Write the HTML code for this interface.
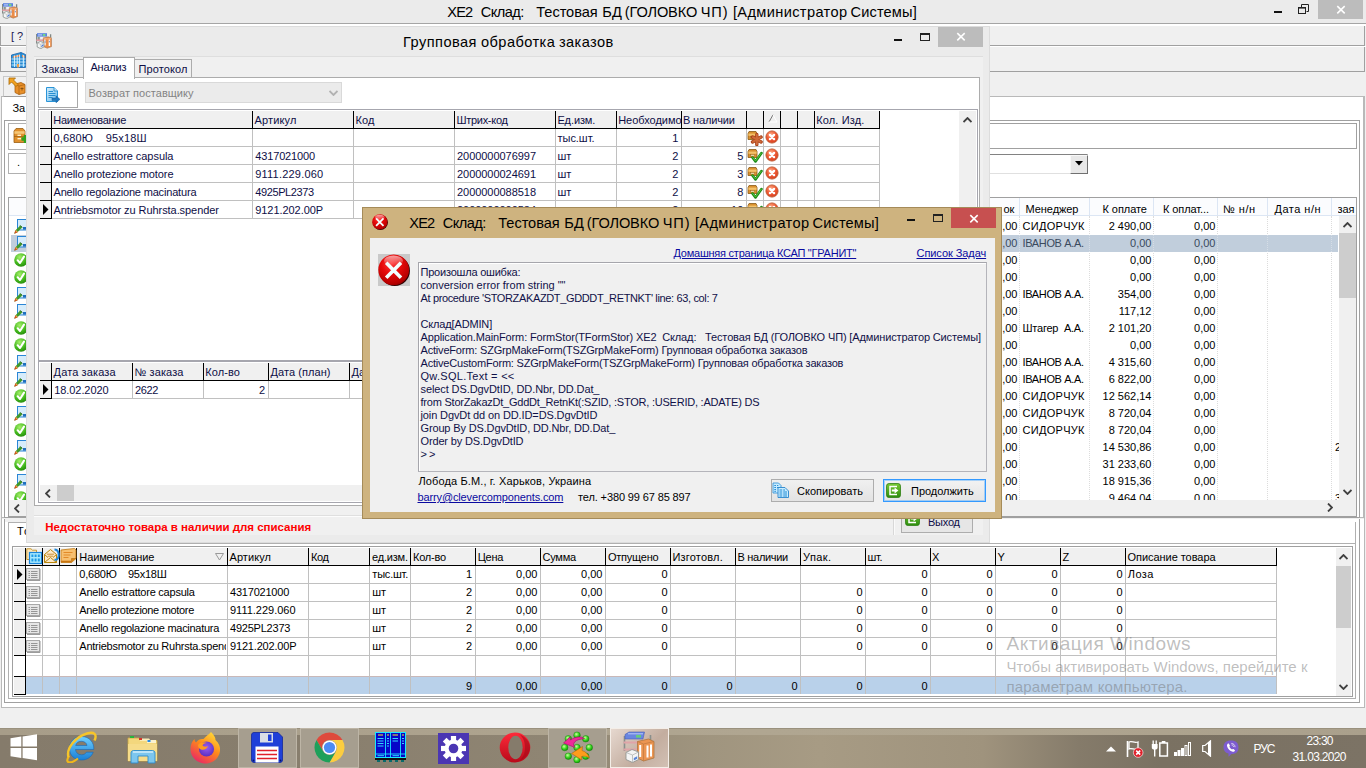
<!DOCTYPE html>
<html><head><meta charset="utf-8"><title>XE2</title>
<style>
html,body{margin:0;padding:0;}
body{width:1366px;height:768px;overflow:hidden;position:relative;background:#f0f0f0;font-family:"Liberation Sans",sans-serif;font-size:11px;}
div,span,svg{position:absolute;box-sizing:content-box;}
span{white-space:pre;}
</style></head><body>
<div style="left:0px;top:0px;width:1366px;height:23px;background:#ebebeb;"></div>
<div style="left:0px;top:23px;width:1366px;height:1px;background:#a5a5a5;"></div>
<span style="left:447.30px;top:5px;font-size:14.6px;line-height:14.6px;color:#000;letter-spacing:-0.897px;">XE2</span>
<span style="left:480.80px;top:5px;font-size:14.6px;line-height:14.6px;color:#000;letter-spacing:-0.539px;">Склад:</span>
<span style="left:536.30px;top:5px;font-size:14.6px;line-height:14.6px;color:#000;letter-spacing:-0.052px;">Тестовая</span>
<span style="left:602.20px;top:5px;font-size:14.6px;line-height:14.6px;color:#000;letter-spacing:0.331px;">БД</span>
<span style="left:624.70px;top:5px;font-size:14.6px;line-height:14.6px;color:#000;letter-spacing:-0.126px;">(ГОЛОВКО</span>
<span style="left:700.80px;top:5px;font-size:14.6px;line-height:14.6px;color:#000;letter-spacing:0.811px;">ЧП)</span>
<span style="left:732.90px;top:5px;font-size:14.6px;line-height:14.6px;color:#000;letter-spacing:0.372px;">[Администратор</span>
<span style="left:850.60px;top:5px;font-size:14.6px;line-height:14.6px;color:#000;letter-spacing:0.128px;">Системы]</span>
<div style="left:1318px;top:0px;width:45px;height:19px;background:#bcbcbc;"></div>
<svg style="left:1336px;top:5px" width="10" height="9" viewBox="0 0 10 9"><path d="M1.3 1.2 L8.7 8.3 M8.7 1.2 L1.3 8.3" stroke="#fff" stroke-width="1.6" fill="none"/></svg>
<div style="left:1274px;top:11px;width:8px;height:2px;background:#111;"></div>
<svg style="left:1298px;top:4px" width="12" height="11" viewBox="0 0 12 11"><path d="M3.5 3 V0.5 H10.5 V7.5 H8.5" stroke="#222" fill="none"/><rect x="0.5" y="3.5" width="7" height="6" stroke="#222" fill="none"/><path d="M0 3.8 H8" stroke="#222" stroke-width="1.6"/></svg>
<div style="left:0px;top:24px;width:1366px;height:2px;background:#fff;"></div>
<div style="left:0px;top:26px;width:1363px;height:19px;background:#f0f0f0;border-right:1px solid #a0a0a0;border-bottom:1px solid #a0a0a0;border-left:1px solid #a0a0a0;"></div>
<div style="left:0px;top:46px;width:1366px;height:1px;background:#fff;"></div>
<div style="left:0px;top:47px;width:1363px;height:24px;background:#f0f0f0;border-right:1px solid #a0a0a0;border-bottom:1px solid #a0a0a0;border-left:1px solid #a0a0a0;"></div>
<div style="left:1px;top:96px;width:1361px;height:420px;background:#fff;border:1px solid #b9b9b9;"></div>
<div style="left:4px;top:120px;width:1354px;height:396px;border:1px solid #a0a0a0;"></div>
<div style="left:600px;top:123px;width:755px;height:24px;background:#fff;border:1px solid #a0a0a0;"></div>
<div style="left:900px;top:154px;width:186px;height:18px;background:#fff;border:1px solid #828282;border-right-color:#e0e0e0;border-bottom-color:#e0e0e0;"></div>
<div style="left:1070px;top:155px;width:16px;height:17px;background:#e8e8e8;border:1px solid #f8f8f8;border-right-color:#707070;border-bottom-color:#707070;"></div>
<svg style="left:1075px;top:161px" width="8" height="5"><path d="M0 0 H8 L4 4.5Z" fill="#000"/></svg>
<div style="left:0px;top:728px;width:1366px;height:40px;background:#82786a;background:linear-gradient(90deg,#857b6b 0,#887e6d 22%,#8f8573 40%,#a0957f 52%,#a79b84 60%,#9f937d 72%,#857b6a 79%,#7a7162 85%,#7c7365 100%);"></div>
<div style="left:0px;top:728px;width:1366px;height:1px;background:#9a917e;"></div>
<div style="left:8px;top:197px;width:1347px;height:318px;background:#fff;border:1px solid #a0a0a0;"></div>
<div style="left:9px;top:198px;width:1347px;height:18px;background:#fbfcfe;"></div>
<div style="left:9px;top:215px;width:1347px;height:1px;background:#dce6f4;"></div>
<div style="left:1018.5px;top:198px;width:1px;height:18px;background:#dce6f4;"></div>
<div style="left:1018.5px;top:216px;width:0px;height:284px;border-left:1px dotted #dcdcdc;"></div>
<div style="left:1088.5px;top:198px;width:1px;height:18px;background:#dce6f4;"></div>
<div style="left:1088.5px;top:216px;width:0px;height:284px;border-left:1px dotted #dcdcdc;"></div>
<div style="left:1152.5px;top:198px;width:1px;height:18px;background:#dce6f4;"></div>
<div style="left:1152.5px;top:216px;width:0px;height:284px;border-left:1px dotted #dcdcdc;"></div>
<div style="left:1216.5px;top:198px;width:1px;height:18px;background:#dce6f4;"></div>
<div style="left:1216.5px;top:216px;width:0px;height:284px;border-left:1px dotted #dcdcdc;"></div>
<div style="left:1266.5px;top:198px;width:1px;height:18px;background:#dce6f4;"></div>
<div style="left:1266.5px;top:216px;width:0px;height:284px;border-left:1px dotted #dcdcdc;"></div>
<div style="left:1330.5px;top:198px;width:1px;height:18px;background:#dce6f4;"></div>
<div style="left:1330.5px;top:216px;width:0px;height:284px;border-left:1px dotted #dcdcdc;"></div>
<span style="left:1003.50px;top:204px;font-size:11px;line-height:11px;color:#000;">ок</span>
<span style="left:1025.50px;top:204px;font-size:11px;line-height:11px;color:#000;letter-spacing:-0.054px;">Менеджер</span>
<span style="left:1102.50px;top:204px;font-size:11px;line-height:11px;color:#000;letter-spacing:-0.054px;">К оплате</span>
<span style="left:1163.00px;top:204px;font-size:11px;line-height:11px;color:#000;letter-spacing:-0.092px;">К оплат...</span>
<span style="left:1223.00px;top:204px;font-size:11px;line-height:11px;color:#000;letter-spacing:0.484px;">№ н/н</span>
<span style="left:1274.50px;top:204px;font-size:11px;line-height:11px;color:#000;letter-spacing:0.482px;">Дата н/н</span>
<span style="left:1337.50px;top:204px;font-size:11px;line-height:11px;color:#000;width:18.5px;overflow:hidden;letter-spacing:-0.062px;">зая</span>
<div style="left:6px;top:216px;width:1350px;height:284px;overflow:hidden;">
<span style="left:990.08px;top:5px;font-size:11px;line-height:11px;color:#000;">0,00</span>
<span style="left:1016.50px;top:5px;font-size:11px;line-height:11px;color:#000;letter-spacing:0.297px;">СИДОРЧУК</span>
<span style="left:1102.67px;top:5px;font-size:11px;line-height:11px;color:#000;">2 490,00</span>
<span style="left:1188.08px;top:5px;font-size:11px;line-height:11px;color:#000;">0,00</span>
<div style="left:5px;top:18.5px;width:1327px;height:17px;background:#c1cedc;"></div>
<div style="left:1012.5px;top:18.5px;width:0px;height:17px;border-left:1px dotted #d5dde6;"></div>
<div style="left:1082.5px;top:18.5px;width:0px;height:17px;border-left:1px dotted #d5dde6;"></div>
<div style="left:1146.5px;top:18.5px;width:0px;height:17px;border-left:1px dotted #d5dde6;"></div>
<div style="left:1210.5px;top:18.5px;width:0px;height:17px;border-left:1px dotted #d5dde6;"></div>
<div style="left:1260.5px;top:18.5px;width:0px;height:17px;border-left:1px dotted #d5dde6;"></div>
<div style="left:1324.5px;top:18.5px;width:0px;height:17px;border-left:1px dotted #d5dde6;"></div>
<span style="left:990.08px;top:22px;font-size:11px;line-height:11px;color:#3a4a5e;">0,00</span>
<span style="left:1016.50px;top:22px;font-size:11px;line-height:11px;color:#3a4a5e;letter-spacing:-0.355px;">ІВАНОВ А.А.</span>
<span style="left:1124.08px;top:22px;font-size:11px;line-height:11px;color:#3a4a5e;">0,00</span>
<span style="left:1188.08px;top:22px;font-size:11px;line-height:11px;color:#3a4a5e;">0,00</span>
<span style="left:990.08px;top:39px;font-size:11px;line-height:11px;color:#000;">0,00</span>
<span style="left:1124.08px;top:39px;font-size:11px;line-height:11px;color:#000;">0,00</span>
<span style="left:1188.08px;top:39px;font-size:11px;line-height:11px;color:#000;">0,00</span>
<span style="left:990.08px;top:56px;font-size:11px;line-height:11px;color:#000;">0,00</span>
<span style="left:1124.08px;top:56px;font-size:11px;line-height:11px;color:#000;">0,00</span>
<span style="left:1188.08px;top:56px;font-size:11px;line-height:11px;color:#000;">0,00</span>
<span style="left:990.08px;top:73px;font-size:11px;line-height:11px;color:#000;">0,00</span>
<span style="left:1016.50px;top:73px;font-size:11px;line-height:11px;color:#000;letter-spacing:-0.355px;">ІВАНОВ А.А.</span>
<span style="left:1111.84px;top:73px;font-size:11px;line-height:11px;color:#000;">354,00</span>
<span style="left:1188.08px;top:73px;font-size:11px;line-height:11px;color:#000;">0,00</span>
<span style="left:990.08px;top:90px;font-size:11px;line-height:11px;color:#000;">0,00</span>
<span style="left:1112.67px;top:90px;font-size:11px;line-height:11px;color:#000;">117,12</span>
<span style="left:1188.08px;top:90px;font-size:11px;line-height:11px;color:#000;">0,00</span>
<span style="left:990.08px;top:107px;font-size:11px;line-height:11px;color:#000;">0,00</span>
<span style="left:1016.50px;top:107px;font-size:11px;line-height:11px;color:#000;letter-spacing:-0.230px;">Штагер  А.А.</span>
<span style="left:1102.67px;top:107px;font-size:11px;line-height:11px;color:#000;">2 101,20</span>
<span style="left:1188.08px;top:107px;font-size:11px;line-height:11px;color:#000;">0,00</span>
<span style="left:990.08px;top:124px;font-size:11px;line-height:11px;color:#000;">0,00</span>
<span style="left:1124.08px;top:124px;font-size:11px;line-height:11px;color:#000;">0,00</span>
<span style="left:1188.08px;top:124px;font-size:11px;line-height:11px;color:#000;">0,00</span>
<span style="left:990.08px;top:141px;font-size:11px;line-height:11px;color:#000;">0,00</span>
<span style="left:1016.50px;top:141px;font-size:11px;line-height:11px;color:#000;letter-spacing:-0.355px;">ІВАНОВ А.А.</span>
<span style="left:1102.67px;top:141px;font-size:11px;line-height:11px;color:#000;">4 315,60</span>
<span style="left:1188.08px;top:141px;font-size:11px;line-height:11px;color:#000;">0,00</span>
<span style="left:990.08px;top:158px;font-size:11px;line-height:11px;color:#000;">0,00</span>
<span style="left:1016.50px;top:158px;font-size:11px;line-height:11px;color:#000;letter-spacing:-0.355px;">ІВАНОВ А.А.</span>
<span style="left:1102.67px;top:158px;font-size:11px;line-height:11px;color:#000;">6 822,00</span>
<span style="left:1188.08px;top:158px;font-size:11px;line-height:11px;color:#000;">0,00</span>
<span style="left:990.08px;top:175px;font-size:11px;line-height:11px;color:#000;">0,00</span>
<span style="left:1016.50px;top:175px;font-size:11px;line-height:11px;color:#000;letter-spacing:0.297px;">СИДОРЧУК</span>
<span style="left:1096.56px;top:175px;font-size:11px;line-height:11px;color:#000;">12 562,14</span>
<span style="left:1188.08px;top:175px;font-size:11px;line-height:11px;color:#000;">0,00</span>
<span style="left:990.08px;top:192px;font-size:11px;line-height:11px;color:#000;">0,00</span>
<span style="left:1016.50px;top:192px;font-size:11px;line-height:11px;color:#000;letter-spacing:0.297px;">СИДОРЧУК</span>
<span style="left:1102.67px;top:192px;font-size:11px;line-height:11px;color:#000;">8 720,04</span>
<span style="left:1188.08px;top:192px;font-size:11px;line-height:11px;color:#000;">0,00</span>
<span style="left:990.08px;top:209px;font-size:11px;line-height:11px;color:#000;">0,00</span>
<span style="left:1016.50px;top:209px;font-size:11px;line-height:11px;color:#000;letter-spacing:0.297px;">СИДОРЧУК</span>
<span style="left:1102.67px;top:209px;font-size:11px;line-height:11px;color:#000;">8 720,04</span>
<span style="left:1188.08px;top:209px;font-size:11px;line-height:11px;color:#000;">0,00</span>
<span style="left:990.08px;top:226px;font-size:11px;line-height:11px;color:#000;">0,00</span>
<span style="left:1096.56px;top:226px;font-size:11px;line-height:11px;color:#000;">14 530,86</span>
<span style="left:1188.08px;top:226px;font-size:11px;line-height:11px;color:#000;">0,00</span>
<span style="left:990.08px;top:243px;font-size:11px;line-height:11px;color:#000;">0,00</span>
<span style="left:1096.56px;top:243px;font-size:11px;line-height:11px;color:#000;">31 233,60</span>
<span style="left:1188.08px;top:243px;font-size:11px;line-height:11px;color:#000;">0,00</span>
<span style="left:990.08px;top:260px;font-size:11px;line-height:11px;color:#000;">0,00</span>
<span style="left:1096.56px;top:260px;font-size:11px;line-height:11px;color:#000;">18 915,36</span>
<span style="left:1188.08px;top:260px;font-size:11px;line-height:11px;color:#000;">0,00</span>
<span style="left:990.08px;top:277px;font-size:11px;line-height:11px;color:#000;">0,00</span>
<span style="left:1102.67px;top:277px;font-size:11px;line-height:11px;color:#000;">9 464,04</span>
<span style="left:1188.08px;top:277px;font-size:11px;line-height:11px;color:#000;">0,00</span>
<svg style="left:8px;top:2.5px" width="16" height="16" viewBox="0 0 16 16">
<rect x="3.5" y="0.5" width="11" height="10.5" fill="#d6ecfb" stroke="#2a86d6" stroke-width="1"/>
<rect x="9" y="8" width="5" height="2.6" fill="#1f6fc0"/>
<path d="M0.3 14.7 L1.3 11.6 L6.2 6.4 L8.2 8.4 L3.2 13.6Z" fill="#3f9a2a"/>
<path d="M0.3 14.7 L1.3 11.6 L3.2 13.6Z" fill="#d8481a"/><path d="M1.6 11.3 L3.5 13.3" stroke="#f0a050" stroke-width="1.2"/>
<path d="M6.2 6.4 L8.2 8.4" stroke="#2a6a1a" stroke-width="1"/></svg>
<svg style="left:8px;top:19.5px" width="16" height="16" viewBox="0 0 16 16">
<rect x="3.5" y="0.5" width="11" height="10.5" fill="#d6ecfb" stroke="#2a86d6" stroke-width="1"/>
<rect x="9" y="8" width="5" height="2.6" fill="#1f6fc0"/>
<path d="M0.3 14.7 L1.3 11.6 L6.2 6.4 L8.2 8.4 L3.2 13.6Z" fill="#3f9a2a"/>
<path d="M0.3 14.7 L1.3 11.6 L3.2 13.6Z" fill="#d8481a"/><path d="M1.6 11.3 L3.5 13.3" stroke="#f0a050" stroke-width="1.2"/>
<path d="M6.2 6.4 L8.2 8.4" stroke="#2a6a1a" stroke-width="1"/></svg>
<svg style="left:8px;top:37.0px" width="14" height="14" viewBox="0 0 14 14">
<defs><radialGradient id="gk37.0" cx="0.4" cy="0.3" r="0.8"><stop offset="0" stop-color="#a4f06a"/><stop offset="0.6" stop-color="#3fb51a"/><stop offset="1" stop-color="#1f7d0a"/></radialGradient></defs>
<circle cx="7" cy="7" r="6.8" fill="url(#gk37.0)"/>
<path d="M3.6 7.2 L6 10 L10 3.6" stroke="#fff" stroke-width="2" fill="none" stroke-linejoin="round" stroke-linecap="round"/></svg>
<svg style="left:8px;top:54.0px" width="14" height="14" viewBox="0 0 14 14">
<defs><radialGradient id="gk54.0" cx="0.4" cy="0.3" r="0.8"><stop offset="0" stop-color="#a4f06a"/><stop offset="0.6" stop-color="#3fb51a"/><stop offset="1" stop-color="#1f7d0a"/></radialGradient></defs>
<circle cx="7" cy="7" r="6.8" fill="url(#gk54.0)"/>
<path d="M3.6 7.2 L6 10 L10 3.6" stroke="#fff" stroke-width="2" fill="none" stroke-linejoin="round" stroke-linecap="round"/></svg>
<svg style="left:8px;top:70.5px" width="16" height="16" viewBox="0 0 16 16">
<rect x="3.5" y="0.5" width="11" height="10.5" fill="#d6ecfb" stroke="#2a86d6" stroke-width="1"/>
<rect x="9" y="8" width="5" height="2.6" fill="#1f6fc0"/>
<path d="M0.3 14.7 L1.3 11.6 L6.2 6.4 L8.2 8.4 L3.2 13.6Z" fill="#3f9a2a"/>
<path d="M0.3 14.7 L1.3 11.6 L3.2 13.6Z" fill="#d8481a"/><path d="M1.6 11.3 L3.5 13.3" stroke="#f0a050" stroke-width="1.2"/>
<path d="M6.2 6.4 L8.2 8.4" stroke="#2a6a1a" stroke-width="1"/></svg>
<svg style="left:8px;top:87.5px" width="16" height="16" viewBox="0 0 16 16">
<rect x="3.5" y="0.5" width="11" height="10.5" fill="#d6ecfb" stroke="#2a86d6" stroke-width="1"/>
<rect x="9" y="8" width="5" height="2.6" fill="#1f6fc0"/>
<path d="M0.3 14.7 L1.3 11.6 L6.2 6.4 L8.2 8.4 L3.2 13.6Z" fill="#3f9a2a"/>
<path d="M0.3 14.7 L1.3 11.6 L3.2 13.6Z" fill="#d8481a"/><path d="M1.6 11.3 L3.5 13.3" stroke="#f0a050" stroke-width="1.2"/>
<path d="M6.2 6.4 L8.2 8.4" stroke="#2a6a1a" stroke-width="1"/></svg>
<svg style="left:8px;top:105.0px" width="14" height="14" viewBox="0 0 14 14">
<defs><radialGradient id="gk105.0" cx="0.4" cy="0.3" r="0.8"><stop offset="0" stop-color="#a4f06a"/><stop offset="0.6" stop-color="#3fb51a"/><stop offset="1" stop-color="#1f7d0a"/></radialGradient></defs>
<circle cx="7" cy="7" r="6.8" fill="url(#gk105.0)"/>
<path d="M3.6 7.2 L6 10 L10 3.6" stroke="#fff" stroke-width="2" fill="none" stroke-linejoin="round" stroke-linecap="round"/></svg>
<svg style="left:8px;top:122.0px" width="14" height="14" viewBox="0 0 14 14">
<defs><radialGradient id="gk122.0" cx="0.4" cy="0.3" r="0.8"><stop offset="0" stop-color="#a4f06a"/><stop offset="0.6" stop-color="#3fb51a"/><stop offset="1" stop-color="#1f7d0a"/></radialGradient></defs>
<circle cx="7" cy="7" r="6.8" fill="url(#gk122.0)"/>
<path d="M3.6 7.2 L6 10 L10 3.6" stroke="#fff" stroke-width="2" fill="none" stroke-linejoin="round" stroke-linecap="round"/></svg>
<svg style="left:8px;top:138.5px" width="16" height="16" viewBox="0 0 16 16">
<rect x="3.5" y="0.5" width="11" height="10.5" fill="#d6ecfb" stroke="#2a86d6" stroke-width="1"/>
<rect x="9" y="8" width="5" height="2.6" fill="#1f6fc0"/>
<path d="M0.3 14.7 L1.3 11.6 L6.2 6.4 L8.2 8.4 L3.2 13.6Z" fill="#3f9a2a"/>
<path d="M0.3 14.7 L1.3 11.6 L3.2 13.6Z" fill="#d8481a"/><path d="M1.6 11.3 L3.5 13.3" stroke="#f0a050" stroke-width="1.2"/>
<path d="M6.2 6.4 L8.2 8.4" stroke="#2a6a1a" stroke-width="1"/></svg>
<svg style="left:8px;top:155.5px" width="16" height="16" viewBox="0 0 16 16">
<rect x="3.5" y="0.5" width="11" height="10.5" fill="#d6ecfb" stroke="#2a86d6" stroke-width="1"/>
<rect x="9" y="8" width="5" height="2.6" fill="#1f6fc0"/>
<path d="M0.3 14.7 L1.3 11.6 L6.2 6.4 L8.2 8.4 L3.2 13.6Z" fill="#3f9a2a"/>
<path d="M0.3 14.7 L1.3 11.6 L3.2 13.6Z" fill="#d8481a"/><path d="M1.6 11.3 L3.5 13.3" stroke="#f0a050" stroke-width="1.2"/>
<path d="M6.2 6.4 L8.2 8.4" stroke="#2a6a1a" stroke-width="1"/></svg>
<svg style="left:8px;top:173.0px" width="14" height="14" viewBox="0 0 14 14">
<defs><radialGradient id="gk173.0" cx="0.4" cy="0.3" r="0.8"><stop offset="0" stop-color="#a4f06a"/><stop offset="0.6" stop-color="#3fb51a"/><stop offset="1" stop-color="#1f7d0a"/></radialGradient></defs>
<circle cx="7" cy="7" r="6.8" fill="url(#gk173.0)"/>
<path d="M3.6 7.2 L6 10 L10 3.6" stroke="#fff" stroke-width="2" fill="none" stroke-linejoin="round" stroke-linecap="round"/></svg>
<svg style="left:8px;top:189.5px" width="16" height="16" viewBox="0 0 16 16">
<rect x="3.5" y="0.5" width="11" height="10.5" fill="#d6ecfb" stroke="#2a86d6" stroke-width="1"/>
<rect x="9" y="8" width="5" height="2.6" fill="#1f6fc0"/>
<path d="M0.3 14.7 L1.3 11.6 L6.2 6.4 L8.2 8.4 L3.2 13.6Z" fill="#3f9a2a"/>
<path d="M0.3 14.7 L1.3 11.6 L3.2 13.6Z" fill="#d8481a"/><path d="M1.6 11.3 L3.5 13.3" stroke="#f0a050" stroke-width="1.2"/>
<path d="M6.2 6.4 L8.2 8.4" stroke="#2a6a1a" stroke-width="1"/></svg>
<svg style="left:8px;top:207.0px" width="14" height="14" viewBox="0 0 14 14">
<defs><radialGradient id="gk207.0" cx="0.4" cy="0.3" r="0.8"><stop offset="0" stop-color="#a4f06a"/><stop offset="0.6" stop-color="#3fb51a"/><stop offset="1" stop-color="#1f7d0a"/></radialGradient></defs>
<circle cx="7" cy="7" r="6.8" fill="url(#gk207.0)"/>
<path d="M3.6 7.2 L6 10 L10 3.6" stroke="#fff" stroke-width="2" fill="none" stroke-linejoin="round" stroke-linecap="round"/></svg>
<svg style="left:8px;top:223.5px" width="16" height="16" viewBox="0 0 16 16">
<rect x="3.5" y="0.5" width="11" height="10.5" fill="#d6ecfb" stroke="#2a86d6" stroke-width="1"/>
<rect x="9" y="8" width="5" height="2.6" fill="#1f6fc0"/>
<path d="M0.3 14.7 L1.3 11.6 L6.2 6.4 L8.2 8.4 L3.2 13.6Z" fill="#3f9a2a"/>
<path d="M0.3 14.7 L1.3 11.6 L3.2 13.6Z" fill="#d8481a"/><path d="M1.6 11.3 L3.5 13.3" stroke="#f0a050" stroke-width="1.2"/>
<path d="M6.2 6.4 L8.2 8.4" stroke="#2a6a1a" stroke-width="1"/></svg>
<svg style="left:8px;top:241.0px" width="14" height="14" viewBox="0 0 14 14">
<defs><radialGradient id="gk241.0" cx="0.4" cy="0.3" r="0.8"><stop offset="0" stop-color="#a4f06a"/><stop offset="0.6" stop-color="#3fb51a"/><stop offset="1" stop-color="#1f7d0a"/></radialGradient></defs>
<circle cx="7" cy="7" r="6.8" fill="url(#gk241.0)"/>
<path d="M3.6 7.2 L6 10 L10 3.6" stroke="#fff" stroke-width="2" fill="none" stroke-linejoin="round" stroke-linecap="round"/></svg>
<svg style="left:8px;top:257.5px" width="16" height="16" viewBox="0 0 16 16">
<rect x="3.5" y="0.5" width="11" height="10.5" fill="#d6ecfb" stroke="#2a86d6" stroke-width="1"/>
<rect x="9" y="8" width="5" height="2.6" fill="#1f6fc0"/>
<path d="M0.3 14.7 L1.3 11.6 L6.2 6.4 L8.2 8.4 L3.2 13.6Z" fill="#3f9a2a"/>
<path d="M0.3 14.7 L1.3 11.6 L3.2 13.6Z" fill="#d8481a"/><path d="M1.6 11.3 L3.5 13.3" stroke="#f0a050" stroke-width="1.2"/>
<path d="M6.2 6.4 L8.2 8.4" stroke="#2a6a1a" stroke-width="1"/></svg>
<svg style="left:8px;top:275.0px" width="14" height="14" viewBox="0 0 14 14">
<defs><radialGradient id="gk275.0" cx="0.4" cy="0.3" r="0.8"><stop offset="0" stop-color="#a4f06a"/><stop offset="0.6" stop-color="#3fb51a"/><stop offset="1" stop-color="#1f7d0a"/></radialGradient></defs>
<circle cx="7" cy="7" r="6.8" fill="url(#gk275.0)"/>
<path d="M3.6 7.2 L6 10 L10 3.6" stroke="#fff" stroke-width="2" fill="none" stroke-linejoin="round" stroke-linecap="round"/></svg>
<span style="left:1329.00px;top:226px;font-size:11px;line-height:11px;color:#000;">2</span>
<span style="left:1329.00px;top:277px;font-size:11px;line-height:11px;color:#000;">3</span>
</div>
<div style="left:1339px;top:216px;width:17px;height:284px;background:#f0f0f0;"></div>
<div style="left:1339px;top:233px;width:17px;height:65px;background:#cdcdcd;"></div>
<svg style="left:1343px;top:222px" width="9" height="6"><path d="M0.5 5 L4.5 1 L8.5 5" stroke="#404040" stroke-width="1.8" fill="none"/></svg>
<svg style="left:1343px;top:489px" width="9" height="6"><path d="M0.5 1 L4.5 5 L8.5 1" stroke="#404040" stroke-width="1.8" fill="none"/></svg>
<div style="left:9px;top:500px;width:1347px;height:16px;background:#f0f0f0;"></div>
<svg style="left:1327px;top:503px" width="6" height="9"><path d="M1 0.5 L5 4.5 L1 8.5" stroke="#404040" stroke-width="1.8" fill="none"/></svg>
<svg style="left:14px;top:503.5px" width="6" height="9"><path d="M5 0.5 L1 4.5 L5 8.5" stroke="#404040" stroke-width="1.8" fill="none"/></svg>
<div style="left:1339px;top:500px;width:17px;height:16px;background:#f0f0f0;"></div>
<div style="left:4px;top:120px;width:1px;height:398px;background:#a0a0a0;"></div>
<span style="left:11.00px;top:31px;font-size:11px;line-height:11px;color:#1a1a50;">[ ?</span>
<svg style="left:11px;top:52px" width="16" height="16" viewBox="0 0 16 16">
<path d="M0.5 3 L10 0.5 L14.5 2.5 V15.5 H0.5Z" fill="#2f9be0" stroke="#1a5fa8" stroke-width="0.8"/>
<path d="M10 0.5 V15.5" stroke="#1a5fa8" stroke-width="0.6"/>
<path d="M2 4.2 L9 2.5 V4.5 L2 6Z" fill="#f08a4a"/><path d="M11 2.8 L13.8 4 V6 L11 5Z" fill="#f08a4a"/>
<path d="M3.5 3.5 V15 M6.2 3 V15 M8.6 2.6 V15 M12.4 3 V15" stroke="#dff2ff" stroke-width="0.9"/>
<path d="M0.5 7 H14.5 M0.5 10 H14.5 M0.5 13 H14.5" stroke="#dff2ff" stroke-width="0.8"/>
<rect x="6" y="12" width="2" height="3.5" fill="#f0a04a"/></svg>
<div style="left:3px;top:76px;width:24px;height:19px;background:#f0f0f0;border:1px solid #c8c8c8;border-bottom-color:#a0a0a0;"></div>
<svg style="left:8px;top:77px" width="18" height="18" viewBox="0 0 18 18">
<path d="M7 7 L13 5.5 L17 7.5 V16 L11 17.5 L7 15.5Z" fill="#e8902a" stroke="#a8600f" stroke-width="0.8"/>
<path d="M7 7 L11 9 L17 7.5 M11 9 V17.5" stroke="#a8600f" stroke-width="0.7" fill="none"/>
<path d="M12.5 11.5 H15.5 M14 10.5 V13.5" stroke="#7a4a10" stroke-width="0.8"/>
<path d="M1 1 H7.5 L5.5 3 L10 7.5 L8 9.5 L3.5 5 L1 7.5Z" fill="#f0a020" stroke="#a86a08" stroke-width="0.8"/></svg>
<span style="left:12.50px;top:103px;font-size:11px;line-height:11px;color:#000;letter-spacing:-0.266px;">За</span>
<div style="left:8px;top:123px;width:24px;height:25px;background:#fff;border:1px solid #b0b0b0;"></div>
<svg style="left:13px;top:127px" width="16" height="18" viewBox="0 0 16 18">
<path d="M1 4 L3 1.5 H10 L12 4 V15.5 H1Z" fill="#e0902c" stroke="#9a5e12" stroke-width="0.8"/>
<rect x="1.4" y="4.2" width="10.2" height="2.6" fill="#f5c878"/><path d="M1 9.5 H12" stroke="#9a5e12" stroke-width="0.7"/>
<rect x="4.5" y="7.6" width="3.5" height="1.4" fill="#fff3d0"/><rect x="4.5" y="11" width="3.5" height="1.4" fill="#fff3d0"/>
<path d="M12.5 8 V16 M8.5 12 H16.5" stroke="#2fa31e" stroke-width="3.4"/></svg>
<div style="left:8px;top:153px;width:24px;height:19px;background:#fff;border:1px solid #b0b0b0;"></div>
<span style="left:17.00px;top:157px;font-size:11px;line-height:11px;color:#000;">.</span>
<div style="left:1px;top:519px;width:1363px;height:188px;background:#fff;"></div>
<div style="left:1px;top:96px;width:1px;height:612px;background:#b9b9b9;"></div>
<div style="left:1364px;top:96px;width:1px;height:612px;background:#b9b9b9;"></div>
<div style="left:1px;top:707px;width:1364px;height:1px;background:#b9b9b9;"></div>
<div style="left:4px;top:519px;width:1px;height:184px;background:#a0a0a0;"></div>
<div style="left:1359px;top:519px;width:1px;height:184px;background:#a0a0a0;"></div>
<div style="left:4px;top:702px;width:1356px;height:1px;background:#a0a0a0;"></div>
<div style="left:5px;top:519px;width:21px;height:3px;background:#f0f0f0;"></div>
<div style="left:8px;top:522px;width:1346px;height:176px;border:1px solid #b0b0b0;border-top:none;"></div>
<div style="left:8px;top:522px;width:18px;height:1px;background:#b0b0b0;"></div>
<span style="left:17.00px;top:526px;font-size:11px;line-height:11px;color:#000;letter-spacing:1.016px;">То</span>
<div style="left:60px;top:543px;width:1296px;height:1px;background:#b0b0b0;"></div>
<div style="left:12px;top:546px;width:1339px;height:149px;border:1px solid #a0a0a0;"></div>
<div style="left:14px;top:548px;width:1263px;height:17px;background:#f0f0f0;"></div>
<div style="left:14px;top:565px;width:1263px;height:1px;background:#000;"></div>
<div style="left:25px;top:548px;width:1px;height:17px;background:#000;"></div>
<div style="left:42px;top:548px;width:1px;height:17px;background:#000;"></div>
<div style="left:59px;top:548px;width:1px;height:17px;background:#000;"></div>
<div style="left:76px;top:548px;width:1px;height:17px;background:#000;"></div>
<div style="left:227px;top:548px;width:1px;height:17px;background:#000;"></div>
<div style="left:308px;top:548px;width:1px;height:17px;background:#000;"></div>
<div style="left:369px;top:548px;width:1px;height:17px;background:#000;"></div>
<div style="left:410px;top:548px;width:1px;height:17px;background:#000;"></div>
<div style="left:475px;top:548px;width:1px;height:17px;background:#000;"></div>
<div style="left:540px;top:548px;width:1px;height:17px;background:#000;"></div>
<div style="left:605px;top:548px;width:1px;height:17px;background:#000;"></div>
<div style="left:670px;top:548px;width:1px;height:17px;background:#000;"></div>
<div style="left:735px;top:548px;width:1px;height:17px;background:#000;"></div>
<div style="left:800px;top:548px;width:1px;height:17px;background:#000;"></div>
<div style="left:865px;top:548px;width:1px;height:17px;background:#000;"></div>
<div style="left:930px;top:548px;width:1px;height:17px;background:#000;"></div>
<div style="left:995px;top:548px;width:1px;height:17px;background:#000;"></div>
<div style="left:1060px;top:548px;width:1px;height:17px;background:#000;"></div>
<div style="left:1125px;top:548px;width:1px;height:17px;background:#000;"></div>
<div style="left:1276px;top:548px;width:1px;height:17px;background:#000;"></div>
<div style="left:25px;top:548px;width:1px;height:147px;background:#000;"></div>
<div style="left:26px;top:583px;width:1251px;height:1px;background:#c0c0c0;"></div>
<div style="left:14px;top:566px;width:11px;height:17px;background:#f0f0f0;"></div>
<div style="left:14px;top:583px;width:12px;height:1px;background:#000;"></div>
<div style="left:26px;top:601px;width:1251px;height:1px;background:#c0c0c0;"></div>
<div style="left:14px;top:584px;width:11px;height:17px;background:#f0f0f0;"></div>
<div style="left:14px;top:601px;width:12px;height:1px;background:#000;"></div>
<div style="left:26px;top:619px;width:1251px;height:1px;background:#c0c0c0;"></div>
<div style="left:14px;top:602px;width:11px;height:17px;background:#f0f0f0;"></div>
<div style="left:14px;top:619px;width:12px;height:1px;background:#000;"></div>
<div style="left:26px;top:637px;width:1251px;height:1px;background:#c0c0c0;"></div>
<div style="left:14px;top:620px;width:11px;height:17px;background:#f0f0f0;"></div>
<div style="left:14px;top:637px;width:12px;height:1px;background:#000;"></div>
<div style="left:26px;top:655px;width:1251px;height:1px;background:#c0c0c0;"></div>
<div style="left:14px;top:638px;width:11px;height:17px;background:#f0f0f0;"></div>
<div style="left:14px;top:655px;width:12px;height:1px;background:#000;"></div>
<div style="left:14px;top:676px;width:12px;height:1px;background:#000;"></div>
<div style="left:26px;top:676px;width:1251px;height:1px;background:#c9b8b8;"></div>
<div style="left:26px;top:677px;width:1251px;height:17px;background:#b9d1ea;"></div>
<div style="left:14px;top:677px;width:11px;height:17px;background:#f0f0f0;"></div>
<div style="left:14px;top:694px;width:12px;height:1px;background:#000;"></div>
<div style="left:42px;top:566px;width:1px;height:128px;background:#c0c0c0;"></div>
<div style="left:59px;top:566px;width:1px;height:128px;background:#c0c0c0;"></div>
<div style="left:76px;top:566px;width:1px;height:128px;background:#c0c0c0;"></div>
<div style="left:227px;top:566px;width:1px;height:128px;background:#c0c0c0;"></div>
<div style="left:308px;top:566px;width:1px;height:128px;background:#c0c0c0;"></div>
<div style="left:369px;top:566px;width:1px;height:128px;background:#c0c0c0;"></div>
<div style="left:410px;top:566px;width:1px;height:128px;background:#c0c0c0;"></div>
<div style="left:475px;top:566px;width:1px;height:128px;background:#c0c0c0;"></div>
<div style="left:540px;top:566px;width:1px;height:128px;background:#c0c0c0;"></div>
<div style="left:605px;top:566px;width:1px;height:128px;background:#c0c0c0;"></div>
<div style="left:670px;top:566px;width:1px;height:128px;background:#c0c0c0;"></div>
<div style="left:735px;top:566px;width:1px;height:128px;background:#c0c0c0;"></div>
<div style="left:800px;top:566px;width:1px;height:128px;background:#c0c0c0;"></div>
<div style="left:865px;top:566px;width:1px;height:128px;background:#c0c0c0;"></div>
<div style="left:930px;top:566px;width:1px;height:128px;background:#c0c0c0;"></div>
<div style="left:995px;top:566px;width:1px;height:128px;background:#c0c0c0;"></div>
<div style="left:1060px;top:566px;width:1px;height:128px;background:#c0c0c0;"></div>
<div style="left:1125px;top:566px;width:1px;height:128px;background:#c0c0c0;"></div>
<div style="left:1276px;top:566px;width:1px;height:128px;background:#c0c0c0;"></div>
<svg style="left:17px;top:569px" width="6" height="11"><path d="M0 0 L5.5 5.5 L0 11Z" fill="#000"/></svg>
<span style="left:79.30px;top:552px;font-size:11px;line-height:11px;color:#000;letter-spacing:-0.115px;">Наименование</span>
<span style="left:229.50px;top:552px;font-size:11px;line-height:11px;color:#000;letter-spacing:0.081px;">Артикул</span>
<span style="left:311.00px;top:552px;font-size:11px;line-height:11px;color:#000;letter-spacing:-0.352px;">Код</span>
<span style="left:372.00px;top:552px;font-size:11px;line-height:11px;color:#000;letter-spacing:-0.195px;">ед.изм.</span>
<span style="left:413.00px;top:552px;font-size:11px;line-height:11px;color:#000;letter-spacing:-0.241px;">Кол-во</span>
<span style="left:477.80px;top:552px;font-size:11px;line-height:11px;color:#000;letter-spacing:-0.318px;">Цена</span>
<span style="left:542.60px;top:552px;font-size:11px;line-height:11px;color:#000;letter-spacing:-0.270px;">Сумма</span>
<span style="left:608.00px;top:552px;font-size:11px;line-height:11px;color:#000;letter-spacing:-0.242px;">Отпущено</span>
<span style="left:672.50px;top:552px;font-size:11px;line-height:11px;color:#000;letter-spacing:0.187px;">Изготовл.</span>
<span style="left:737.60px;top:552px;font-size:11px;line-height:11px;color:#000;letter-spacing:-0.321px;">В наличии</span>
<span style="left:803.00px;top:552px;font-size:11px;line-height:11px;color:#000;letter-spacing:0.391px;">Упак.</span>
<span style="left:867.60px;top:552px;font-size:11px;line-height:11px;color:#000;letter-spacing:-0.352px;">шт.</span>
<span style="left:932.00px;top:552px;font-size:11px;line-height:11px;color:#000;">X</span>
<span style="left:997.50px;top:552px;font-size:11px;line-height:11px;color:#000;">Y</span>
<span style="left:1062.50px;top:552px;font-size:11px;line-height:11px;color:#000;">Z</span>
<span style="left:1127.60px;top:552px;font-size:11px;line-height:11px;color:#000;letter-spacing:-0.056px;">Описание товара</span>
<svg style="left:215px;top:553px" width="10" height="8"><path d="M0.5 0.5 H8.5 L4.5 7Z" fill="none" stroke="#9a9a9a" stroke-width="1"/></svg>
<svg style="left:26px;top:567.5px" width="15" height="13" viewBox="0 0 15 13"><rect x="0.5" y="0.5" width="13" height="11" fill="#e6e6e6" stroke="#a8a8a8"/><path d="M14 1 V12.5 H1" stroke="#9c9c9c" fill="none"/><path d="M2.5 3.5 H4 M5 3.5 H11.5 M2.5 5.5 H4 M5 5.5 H11.5 M2.5 7.5 H4 M5 7.5 H11.5 M2.5 9.5 H4 M5 9.5 H11.5" stroke="#8c8c8c" stroke-width="0.9"/></svg>
<span style="left:79.30px;top:569px;font-size:11px;line-height:11px;color:#000;letter-spacing:-0.228px;">0,680Ю    95х18Ш</span>
<span style="left:372.30px;top:569px;font-size:11px;line-height:11px;color:#000;letter-spacing:-0.201px;">тыс.шт.</span>
<span style="left:465.88px;top:569px;font-size:11px;line-height:11px;color:#000;">1</span>
<span style="left:516.08px;top:569px;font-size:11px;line-height:11px;color:#000;">0,00</span>
<span style="left:581.08px;top:569px;font-size:11px;line-height:11px;color:#000;">0,00</span>
<span style="left:661.38px;top:569px;font-size:11px;line-height:11px;color:#000;">0</span>
<span style="left:921.38px;top:569px;font-size:11px;line-height:11px;color:#000;">0</span>
<span style="left:986.38px;top:569px;font-size:11px;line-height:11px;color:#000;">0</span>
<span style="left:1051.38px;top:569px;font-size:11px;line-height:11px;color:#000;">0</span>
<span style="left:1116.38px;top:569px;font-size:11px;line-height:11px;color:#000;">0</span>
<svg style="left:26px;top:585.5px" width="15" height="13" viewBox="0 0 15 13"><rect x="0.5" y="0.5" width="13" height="11" fill="#e6e6e6" stroke="#a8a8a8"/><path d="M14 1 V12.5 H1" stroke="#9c9c9c" fill="none"/><path d="M2.5 3.5 H4 M5 3.5 H11.5 M2.5 5.5 H4 M5 5.5 H11.5 M2.5 7.5 H4 M5 7.5 H11.5 M2.5 9.5 H4 M5 9.5 H11.5" stroke="#8c8c8c" stroke-width="0.9"/></svg>
<span style="left:79.30px;top:587px;font-size:11px;line-height:11px;color:#000;letter-spacing:-0.228px;">Anello estrattore capsula</span>
<span style="left:230.00px;top:587px;font-size:11px;line-height:11px;color:#000;letter-spacing:-0.210px;">4317021000</span>
<span style="left:372.30px;top:587px;font-size:11px;line-height:11px;color:#000;">шт</span>
<span style="left:465.88px;top:587px;font-size:11px;line-height:11px;color:#000;">2</span>
<span style="left:516.08px;top:587px;font-size:11px;line-height:11px;color:#000;">0,00</span>
<span style="left:581.08px;top:587px;font-size:11px;line-height:11px;color:#000;">0,00</span>
<span style="left:661.38px;top:587px;font-size:11px;line-height:11px;color:#000;">0</span>
<span style="left:856.38px;top:587px;font-size:11px;line-height:11px;color:#000;">0</span>
<span style="left:921.38px;top:587px;font-size:11px;line-height:11px;color:#000;">0</span>
<span style="left:986.38px;top:587px;font-size:11px;line-height:11px;color:#000;">0</span>
<span style="left:1051.38px;top:587px;font-size:11px;line-height:11px;color:#000;">0</span>
<span style="left:1116.38px;top:587px;font-size:11px;line-height:11px;color:#000;">0</span>
<svg style="left:26px;top:603.5px" width="15" height="13" viewBox="0 0 15 13"><rect x="0.5" y="0.5" width="13" height="11" fill="#e6e6e6" stroke="#a8a8a8"/><path d="M14 1 V12.5 H1" stroke="#9c9c9c" fill="none"/><path d="M2.5 3.5 H4 M5 3.5 H11.5 M2.5 5.5 H4 M5 5.5 H11.5 M2.5 7.5 H4 M5 7.5 H11.5 M2.5 9.5 H4 M5 9.5 H11.5" stroke="#8c8c8c" stroke-width="0.9"/></svg>
<span style="left:79.30px;top:605px;font-size:11px;line-height:11px;color:#000;letter-spacing:-0.317px;">Anello protezione motore</span>
<span style="left:230.00px;top:605px;font-size:11px;line-height:11px;color:#000;letter-spacing:-0.005px;">9111.229.060</span>
<span style="left:372.30px;top:605px;font-size:11px;line-height:11px;color:#000;">шт</span>
<span style="left:465.88px;top:605px;font-size:11px;line-height:11px;color:#000;">2</span>
<span style="left:516.08px;top:605px;font-size:11px;line-height:11px;color:#000;">0,00</span>
<span style="left:581.08px;top:605px;font-size:11px;line-height:11px;color:#000;">0,00</span>
<span style="left:661.38px;top:605px;font-size:11px;line-height:11px;color:#000;">0</span>
<span style="left:856.38px;top:605px;font-size:11px;line-height:11px;color:#000;">0</span>
<span style="left:921.38px;top:605px;font-size:11px;line-height:11px;color:#000;">0</span>
<span style="left:986.38px;top:605px;font-size:11px;line-height:11px;color:#000;">0</span>
<span style="left:1051.38px;top:605px;font-size:11px;line-height:11px;color:#000;">0</span>
<span style="left:1116.38px;top:605px;font-size:11px;line-height:11px;color:#000;">0</span>
<svg style="left:26px;top:621.5px" width="15" height="13" viewBox="0 0 15 13"><rect x="0.5" y="0.5" width="13" height="11" fill="#e6e6e6" stroke="#a8a8a8"/><path d="M14 1 V12.5 H1" stroke="#9c9c9c" fill="none"/><path d="M2.5 3.5 H4 M5 3.5 H11.5 M2.5 5.5 H4 M5 5.5 H11.5 M2.5 7.5 H4 M5 7.5 H11.5 M2.5 9.5 H4 M5 9.5 H11.5" stroke="#8c8c8c" stroke-width="0.9"/></svg>
<span style="left:79.30px;top:623px;font-size:11px;line-height:11px;color:#000;letter-spacing:-0.285px;">Anello regolazione macinatura</span>
<span style="left:230.00px;top:623px;font-size:11px;line-height:11px;color:#000;letter-spacing:-0.223px;">4925PL2373</span>
<span style="left:372.30px;top:623px;font-size:11px;line-height:11px;color:#000;">шт</span>
<span style="left:465.88px;top:623px;font-size:11px;line-height:11px;color:#000;">2</span>
<span style="left:516.08px;top:623px;font-size:11px;line-height:11px;color:#000;">0,00</span>
<span style="left:581.08px;top:623px;font-size:11px;line-height:11px;color:#000;">0,00</span>
<span style="left:661.38px;top:623px;font-size:11px;line-height:11px;color:#000;">0</span>
<span style="left:856.38px;top:623px;font-size:11px;line-height:11px;color:#000;">0</span>
<span style="left:921.38px;top:623px;font-size:11px;line-height:11px;color:#000;">0</span>
<span style="left:986.38px;top:623px;font-size:11px;line-height:11px;color:#000;">0</span>
<span style="left:1051.38px;top:623px;font-size:11px;line-height:11px;color:#000;">0</span>
<span style="left:1116.38px;top:623px;font-size:11px;line-height:11px;color:#000;">0</span>
<svg style="left:26px;top:639.5px" width="15" height="13" viewBox="0 0 15 13"><rect x="0.5" y="0.5" width="13" height="11" fill="#e6e6e6" stroke="#a8a8a8"/><path d="M14 1 V12.5 H1" stroke="#9c9c9c" fill="none"/><path d="M2.5 3.5 H4 M5 3.5 H11.5 M2.5 5.5 H4 M5 5.5 H11.5 M2.5 7.5 H4 M5 7.5 H11.5 M2.5 9.5 H4 M5 9.5 H11.5" stroke="#8c8c8c" stroke-width="0.9"/></svg>
<span style="left:79.30px;top:641px;font-size:11px;line-height:11px;color:#000;width:147px;overflow:hidden;letter-spacing:-0.243px;">Antriebsmotor zu Ruhrsta.spender</span>
<span style="left:230.00px;top:641px;font-size:11px;line-height:11px;color:#000;letter-spacing:-0.174px;">9121.202.00P</span>
<span style="left:372.30px;top:641px;font-size:11px;line-height:11px;color:#000;">шт</span>
<span style="left:465.88px;top:641px;font-size:11px;line-height:11px;color:#000;">2</span>
<span style="left:516.08px;top:641px;font-size:11px;line-height:11px;color:#000;">0,00</span>
<span style="left:581.08px;top:641px;font-size:11px;line-height:11px;color:#000;">0,00</span>
<span style="left:661.38px;top:641px;font-size:11px;line-height:11px;color:#000;">0</span>
<span style="left:856.38px;top:641px;font-size:11px;line-height:11px;color:#000;">0</span>
<span style="left:921.38px;top:641px;font-size:11px;line-height:11px;color:#000;">0</span>
<span style="left:986.38px;top:641px;font-size:11px;line-height:11px;color:#000;">0</span>
<span style="left:1051.38px;top:641px;font-size:11px;line-height:11px;color:#000;">0</span>
<span style="left:1116.38px;top:641px;font-size:11px;line-height:11px;color:#000;">0</span>
<span style="left:1127.80px;top:569px;font-size:11px;line-height:11px;color:#000;letter-spacing:0.408px;">Лоза</span>
<span style="left:465.88px;top:681px;font-size:11px;line-height:11px;color:#000;">9</span>
<span style="left:516.08px;top:681px;font-size:11px;line-height:11px;color:#000;">0,00</span>
<span style="left:581.08px;top:681px;font-size:11px;line-height:11px;color:#000;">0,00</span>
<span style="left:661.38px;top:681px;font-size:11px;line-height:11px;color:#000;">0</span>
<span style="left:726.38px;top:681px;font-size:11px;line-height:11px;color:#000;">0</span>
<span style="left:791.38px;top:681px;font-size:11px;line-height:11px;color:#000;">0</span>
<span style="left:856.38px;top:681px;font-size:11px;line-height:11px;color:#000;">0</span>
<span style="left:921.38px;top:681px;font-size:11px;line-height:11px;color:#000;">0</span>
<svg style="left:26px;top:547px" width="17" height="18" viewBox="0 0 17 18">
<path d="M0.8 1.8 H5 L6.5 3.2 H10.5 V12.5 H0.8Z" fill="#fbe6bd" stroke="#c29226" stroke-width="0.9"/>
<rect x="3.5" y="5.5" width="12" height="11" fill="#a9eaff" stroke="#1a86dc" stroke-width="1.2"/>
<path d="M5.4 7.4 H7.4 V10 H5.4Z M8.6 7.4 H10.6 V10 H8.6Z M11.8 7.4 H13.8 V10 H11.8Z M5.4 11.6 H7.4 V14.4 H5.4Z M8.6 11.6 H10.6 V14.4 H8.6Z M11.8 11.6 H13.8 V14.4 H11.8Z" fill="#1f9be6"/></svg>
<svg style="left:43px;top:547px" width="17" height="18" viewBox="0 0 17 18">
<path d="M1.5 7.5 L7.5 2.5 L13.5 7.5 V15.5 H1.5Z" fill="#fde8c8" stroke="#b8860b" stroke-width="1"/>
<path d="M1.5 15.5 L7.5 10.5 L13.5 15.5 M1.5 7.5 L5 10.5 M13.5 7.5 L10 10.5" stroke="#b8860b" stroke-width="1" fill="none"/>
<path d="M4 7.2 H11 M5 9.2 H10" stroke="#c8923a" stroke-width="1"/>
<path d="M11.5 2.5 C15.5 2.5 16 7 15.5 9.5 C15 12.5 13 13 11.5 12.5" stroke="#1f86d8" stroke-width="2" fill="none"/></svg>
<svg style="left:60px;top:547px" width="17" height="18" viewBox="0 0 17 18">
<path d="M1 3 L14.5 1.5 L16 3 V11.5 L11.5 15.5 H1Z" fill="#f7c070" stroke="#c07a14" stroke-width="0.8"/>
<path d="M16 11.5 H11.5 V15.5" fill="#d6861a" stroke="#b06a10" stroke-width="0.6"/>
<path d="M1 14.5 H11" stroke="#c87410" stroke-width="1.6"/>
<path d="M3.5 5.5 H12.5 M3.5 8 H10.5 M3.5 10.5 H8.5" stroke="#e28a28" stroke-width="1.1"/></svg>
<div style="left:1336px;top:548px;width:15px;height:148px;background:#f0f0f0;"></div>
<div style="left:1336px;top:566px;width:15px;height:62px;background:#cdcdcd;"></div>
<svg style="left:1339px;top:554px" width="9" height="6"><path d="M0.5 5 L4.5 1 L8.5 5" stroke="#404040" stroke-width="1.8" fill="none"/></svg>
<svg style="left:1339px;top:684px" width="9" height="6"><path d="M0.5 1 L4.5 5 L8.5 1" stroke="#404040" stroke-width="1.8" fill="none"/></svg>
<svg style="left:2px;top:3px" width="16" height="16" viewBox="0 0 16 16">
<path d="M0.7 1 V10.5 M14.6 1.2 V5" stroke="#7f8783" stroke-width="1.3"/>
<rect x="1.3" y="3.6" width="6" height="5.6" fill="#dfe2e0"/>
<rect x="1.6" y="4" width="2.2" height="3" fill="#8d9692"/><rect x="4.6" y="4.2" width="2.6" height="1.6" fill="#f6f6f6"/>
<path d="M0.3 7.2 H8" stroke="#e29aa2" stroke-width="1.5"/>
<rect x="1" y="0.2" width="10" height="3.4" fill="#5a82e2"/><rect x="6.8" y="1" width="2.6" height="1.9" fill="#74d884"/><path d="M2 1.9 H6" stroke="#b9caf6" stroke-width="1.2"/>
<path d="M7.3 4.8 L12.2 3.8 L15.6 5 V13.6 L11.2 15.2 L7.3 13.6Z" fill="#ea8c48" stroke="#a77a5a" stroke-width="0.6"/>
<path d="M7.3 4.8 L11.2 6 L15.6 5" stroke="#f6c09a" stroke-width="0.7" fill="none"/>
<path d="M8.9 6.6 V12.6 M13.4 6.6 V13" stroke="#fff" stroke-width="1.5"/><path d="M9 7.5 V10 M13.4 7.8 V9.4" stroke="#6f86b8" stroke-width="0.9"/>
<path d="M1.2 10 L4.4 8.5 L8 9.8 V13.8 L4.8 15.7 L1.2 14Z" fill="#f4f5f5" stroke="#868d8a" stroke-width="0.8"/>
<path d="M1.2 10 L4.8 11.4 L8 9.8 M4.8 11.4 V15.7" stroke="#b4b9b7" stroke-width="0.6" fill="none"/>
<path d="M5.4 13.6 L7.4 11.6" stroke="#4f7ad4" stroke-width="1.3"/>
</svg>
<div style="left:26px;top:26px;width:962px;height:515px;background:#ebebeb;border:1px solid #dcdcdc;">
</div>
<svg style="left:36px;top:33px" width="16" height="16" viewBox="0 0 16 16">
<path d="M0.7 1 V10.5 M14.6 1.2 V5" stroke="#7f8783" stroke-width="1.3"/>
<rect x="1.3" y="3.6" width="6" height="5.6" fill="#dfe2e0"/>
<rect x="1.6" y="4" width="2.2" height="3" fill="#8d9692"/><rect x="4.6" y="4.2" width="2.6" height="1.6" fill="#f6f6f6"/>
<path d="M0.3 7.2 H8" stroke="#e29aa2" stroke-width="1.5"/>
<rect x="1" y="0.2" width="10" height="3.4" fill="#5a82e2"/><rect x="6.8" y="1" width="2.6" height="1.9" fill="#74d884"/><path d="M2 1.9 H6" stroke="#b9caf6" stroke-width="1.2"/>
<path d="M7.3 4.8 L12.2 3.8 L15.6 5 V13.6 L11.2 15.2 L7.3 13.6Z" fill="#ea8c48" stroke="#a77a5a" stroke-width="0.6"/>
<path d="M7.3 4.8 L11.2 6 L15.6 5" stroke="#f6c09a" stroke-width="0.7" fill="none"/>
<path d="M8.9 6.6 V12.6 M13.4 6.6 V13" stroke="#fff" stroke-width="1.5"/><path d="M9 7.5 V10 M13.4 7.8 V9.4" stroke="#6f86b8" stroke-width="0.9"/>
<path d="M1.2 10 L4.4 8.5 L8 9.8 V13.8 L4.8 15.7 L1.2 14Z" fill="#f4f5f5" stroke="#868d8a" stroke-width="0.8"/>
<path d="M1.2 10 L4.8 11.4 L8 9.8 M4.8 11.4 V15.7" stroke="#b4b9b7" stroke-width="0.6" fill="none"/>
<path d="M5.4 13.6 L7.4 11.6" stroke="#4f7ad4" stroke-width="1.3"/>
</svg>
<span style="left:403.10px;top:35px;font-size:14.6px;line-height:14.6px;color:#000;letter-spacing:0.441px;">Групповая</span>
<span style="left:481.00px;top:35px;font-size:14.6px;line-height:14.6px;color:#000;letter-spacing:0.428px;">обработка</span>
<span style="left:559.00px;top:35px;font-size:14.6px;line-height:14.6px;color:#000;letter-spacing:0.387px;">заказов</span>
<div style="left:938px;top:27px;width:45px;height:20px;background:#bcbcbc;"></div>
<svg style="left:956px;top:32px" width="10" height="9" viewBox="0 0 10 9"><path d="M1.3 1.2 L8.7 8.3 M8.7 1.2 L1.3 8.3" stroke="#fff" stroke-width="1.6" fill="none"/></svg>
<div style="left:894px;top:39px;width:8px;height:2px;background:#111;"></div>
<svg style="left:920px;top:33px" width="11" height="9"><rect x="0.5" y="1.5" width="9" height="6" stroke="#222" fill="none"/><path d="M0 1 H10" stroke="#222" stroke-width="2"/></svg>
<div style="left:34px;top:57px;width:949px;height:478px;background:#f0f0f0;"></div>
<div style="left:34px;top:56px;width:949px;height:1px;background:#dedede;"></div>
<div style="left:34px;top:77px;width:944px;height:427px;background:#fff;border:1px solid #acacac;"></div>
<div style="left:36px;top:59px;width:47px;height:17px;background:#f0f0f0;border:1px solid #acacac;border-bottom:none;"></div>
<span style="left:41.50px;top:64px;font-size:11px;line-height:11px;color:#0e0e46;letter-spacing:0.047px;">Заказы</span>
<div style="left:134px;top:59px;width:56px;height:17px;background:#f0f0f0;border:1px solid #acacac;border-bottom:none;"></div>
<span style="left:138.50px;top:64px;font-size:11px;line-height:11px;color:#0e0e46;letter-spacing:0.118px;">Протокол</span>
<div style="left:83px;top:57px;width:50px;height:21px;background:#fff;border:1px solid #acacac;border-bottom:none;"></div>
<span style="left:90.50px;top:62px;font-size:11px;line-height:11px;color:#0e0e46;letter-spacing:-0.228px;">Анализ</span>
<div style="left:38px;top:81px;width:38px;height:25px;background:#fff;border:1px solid #a8a8a8;"></div>
<svg style="left:45px;top:87px" width="16" height="16" viewBox="0 0 16 16">
<defs><linearGradient id="dcg" x1="0" y1="0" x2="1" y2="1"><stop offset="0" stop-color="#d4eefc"/><stop offset="1" stop-color="#6cbcec"/></linearGradient></defs><path d="M1.5 0.5 H9 L12.5 4 V14.5 H1.5Z" fill="url(#dcg)" stroke="#2a94d8" stroke-width="1"/>
<path d="M9 0.5 V4 H12.5" fill="#bfe3f7" stroke="#1f86c8" stroke-width="0.8"/>
<path d="M3.5 4.5 H8 M3.5 6.5 H10.5 M3.5 8.5 H10.5 M3.5 10.5 H7.5" stroke="#2a8fd0" stroke-width="1"/>
<path d="M7 11 H11 V8.8 L15 12.3 L11 15.8 V13.6 H7Z" fill="#1f78c0" stroke="#155e9a" stroke-width="0.5"/>
</svg>
<div style="left:85px;top:82px;width:255px;height:19px;background:#ebebeb;border:1px solid #d9d9d9;"></div>
<span style="left:88.50px;top:88px;font-size:11px;line-height:11px;color:#838383;letter-spacing:0.036px;">Возврат поставщику</span>
<svg style="left:329px;top:90px" width="9" height="6"><path d="M0.5 1 L4.5 5 L8.5 1" stroke="#b2b2b2" stroke-width="1.8" fill="none"/></svg>
<div style="left:38px;top:109px;width:938px;height:250px;border:1px solid #a6a6ae;"></div>
<div style="left:40px;top:111px;width:839px;height:17px;background:#f0f0f0;"></div>
<div style="left:40px;top:128px;width:840px;height:1px;background:#000;"></div>
<div style="left:51px;top:111px;width:1px;height:17px;background:#000;"></div>
<div style="left:252px;top:111px;width:1px;height:17px;background:#000;"></div>
<div style="left:353px;top:111px;width:1px;height:17px;background:#000;"></div>
<div style="left:454px;top:111px;width:1px;height:17px;background:#000;"></div>
<div style="left:555px;top:111px;width:1px;height:17px;background:#000;"></div>
<div style="left:616px;top:111px;width:1px;height:17px;background:#000;"></div>
<div style="left:681px;top:111px;width:1px;height:17px;background:#000;"></div>
<div style="left:746px;top:111px;width:1px;height:17px;background:#000;"></div>
<div style="left:763px;top:111px;width:1px;height:17px;background:#000;"></div>
<div style="left:780px;top:111px;width:1px;height:17px;background:#000;"></div>
<div style="left:797px;top:111px;width:1px;height:17px;background:#000;"></div>
<div style="left:814px;top:111px;width:1px;height:17px;background:#000;"></div>
<div style="left:879px;top:111px;width:1px;height:17px;background:#000;"></div>
<div style="left:51px;top:146px;width:829px;height:1px;background:#c0c0c0;"></div>
<div style="left:40px;top:129px;width:11px;height:17px;background:#f0f0f0;"></div>
<div style="left:40px;top:146px;width:11px;height:1px;background:#000;"></div>
<div style="left:51px;top:164px;width:829px;height:1px;background:#c0c0c0;"></div>
<div style="left:40px;top:147px;width:11px;height:17px;background:#f0f0f0;"></div>
<div style="left:40px;top:164px;width:11px;height:1px;background:#000;"></div>
<div style="left:51px;top:182px;width:829px;height:1px;background:#c0c0c0;"></div>
<div style="left:40px;top:165px;width:11px;height:17px;background:#f0f0f0;"></div>
<div style="left:40px;top:182px;width:11px;height:1px;background:#000;"></div>
<div style="left:51px;top:200px;width:829px;height:1px;background:#c0c0c0;"></div>
<div style="left:40px;top:183px;width:11px;height:17px;background:#f0f0f0;"></div>
<div style="left:40px;top:200px;width:11px;height:1px;background:#000;"></div>
<div style="left:51px;top:218px;width:829px;height:1px;background:#c0c0c0;"></div>
<div style="left:40px;top:201px;width:11px;height:17px;background:#f0f0f0;"></div>
<div style="left:40px;top:218px;width:11px;height:1px;background:#000;"></div>
<div style="left:51px;top:111px;width:1px;height:108px;background:#000;"></div>
<div style="left:252px;top:129px;width:1px;height:90px;background:#c0c0c0;"></div>
<div style="left:353px;top:129px;width:1px;height:90px;background:#c0c0c0;"></div>
<div style="left:454px;top:129px;width:1px;height:90px;background:#c0c0c0;"></div>
<div style="left:555px;top:129px;width:1px;height:90px;background:#c0c0c0;"></div>
<div style="left:616px;top:129px;width:1px;height:90px;background:#c0c0c0;"></div>
<div style="left:681px;top:129px;width:1px;height:90px;background:#c0c0c0;"></div>
<div style="left:746px;top:129px;width:1px;height:90px;background:#c0c0c0;"></div>
<div style="left:763px;top:129px;width:1px;height:90px;background:#c0c0c0;"></div>
<div style="left:780px;top:129px;width:1px;height:90px;background:#c0c0c0;"></div>
<div style="left:797px;top:129px;width:1px;height:90px;background:#c0c0c0;"></div>
<div style="left:814px;top:129px;width:1px;height:90px;background:#c0c0c0;"></div>
<div style="left:879px;top:129px;width:1px;height:90px;background:#c0c0c0;"></div>
<span style="left:53.30px;top:115px;font-size:11px;line-height:11px;color:#0e0e46;letter-spacing:-0.297px;">Наименование</span>
<span style="left:254.40px;top:115px;font-size:11px;line-height:11px;color:#0e0e46;letter-spacing:0.164px;">Артикул</span>
<span style="left:355.40px;top:115px;font-size:11px;line-height:11px;color:#0e0e46;letter-spacing:0.148px;">Код</span>
<span style="left:456.40px;top:115px;font-size:11px;line-height:11px;color:#0e0e46;letter-spacing:-0.285px;">Штрих-код</span>
<span style="left:557.40px;top:115px;font-size:11px;line-height:11px;color:#0e0e46;letter-spacing:-0.104px;">Ед.изм.</span>
<span style="left:618.20px;top:115px;font-size:11px;line-height:11px;color:#0e0e46;letter-spacing:-0.014px;">Необходимо</span>
<span style="left:683.00px;top:115px;font-size:11px;line-height:11px;color:#0e0e46;letter-spacing:-0.146px;">В наличии</span>
<span style="left:816.30px;top:115px;font-size:11px;line-height:11px;color:#0e0e46;letter-spacing:0.125px;">Кол. Изд.</span>
<svg style="left:768px;top:114px" width="10" height="9"><path d="M1 8 L5 0.8" stroke="#777" stroke-width="1" fill="none"/><path d="M5 0.8 L9 8 H1" stroke="#fff" stroke-width="1" fill="none"/></svg>
<span style="left:53.50px;top:133px;font-size:11px;line-height:11px;color:#0e0e46;letter-spacing:0.139px;">0,680Ю    95х18Ш</span>
<span style="left:557.50px;top:133px;font-size:11px;line-height:11px;color:#0e0e46;letter-spacing:-0.034px;">тыс.шт.</span>
<span style="left:672.17px;top:133px;font-size:11px;line-height:11px;color:#0e0e46;">1</span>
<svg style="left:747px;top:130px" width="16" height="16" viewBox="0 0 16 16"><path d="M1 3.5 L2 1.5 H9 L10 3.5 V9.5 H1Z" fill="#d9902f" stroke="#8a5a17" stroke-width="0.8"/><rect x="1.4" y="3.6" width="8.2" height="2.2" fill="#f3c26a"/><rect x="3.6" y="6.6" width="3.8" height="1.4" fill="#fff1c9" stroke="#8a5a17" stroke-width="0.4"/><path d="M9.8 4.5 V14.5 M5.5 7 L14.1 12 M14.1 7 L5.5 12" stroke="#a8421a" stroke-width="3.4" stroke-linecap="round"/><path d="M9.8 4.8 V14.2 M5.8 7.2 L13.8 11.8 M13.8 7.2 L5.8 11.8" stroke="#cf6a3a" stroke-width="2" stroke-linecap="round"/></svg>
<svg style="left:764px;top:129px" width="16" height="16" viewBox="0 0 16 16">
<defs><radialGradient id="rx764129" cx="0.42" cy="0.32" r="0.75"><stop offset="0" stop-color="#ffb08a"/><stop offset="0.5" stop-color="#ee5a34"/><stop offset="1" stop-color="#d43a1c"/></radialGradient></defs>
<circle cx="8" cy="8" r="6.1" fill="url(#rx764129)" stroke="#c05a30" stroke-width="0.9"/>
<path d="M5.9 5.9 L10.1 10.1 M10.1 5.9 L5.9 10.1" stroke="#fff" stroke-width="2.3" stroke-linecap="round"/></svg>
<span style="left:53.50px;top:151px;font-size:11px;line-height:11px;color:#0e0e46;letter-spacing:-0.045px;">Anello estrattore capsula</span>
<span style="left:255.20px;top:151px;font-size:11px;line-height:11px;color:#0e0e46;letter-spacing:-0.132px;">4317021000</span>
<span style="left:457.00px;top:151px;font-size:11px;line-height:11px;color:#0e0e46;letter-spacing:-0.044px;">2000000076997</span>
<span style="left:557.50px;top:151px;font-size:11px;line-height:11px;color:#0e0e46;">шт</span>
<span style="left:672.17px;top:151px;font-size:11px;line-height:11px;color:#0e0e46;">2</span>
<span style="left:737.17px;top:151px;font-size:11px;line-height:11px;color:#0e0e46;">5</span>
<svg style="left:747px;top:148px" width="16" height="16" viewBox="0 0 16 16"><path d="M1 3.5 L2 1.5 H9 L10 3.5 V9.5 H1Z" fill="#d9902f" stroke="#8a5a17" stroke-width="0.8"/><rect x="1.4" y="3.6" width="8.2" height="2.2" fill="#f3c26a"/><rect x="3.6" y="6.6" width="3.8" height="1.4" fill="#fff1c9" stroke="#8a5a17" stroke-width="0.4"/><path d="M5.5 9.5 L8.5 13.5 L14.5 5" stroke="#1d8a18" stroke-width="2.6" fill="none" stroke-linecap="round" stroke-linejoin="round"/><path d="M5.8 9.6 L8.5 13 L14.2 5.2" stroke="#59c53f" stroke-width="1" fill="none" stroke-linecap="round"/></svg>
<svg style="left:764px;top:147px" width="16" height="16" viewBox="0 0 16 16">
<defs><radialGradient id="rx764147" cx="0.42" cy="0.32" r="0.75"><stop offset="0" stop-color="#ffb08a"/><stop offset="0.5" stop-color="#ee5a34"/><stop offset="1" stop-color="#d43a1c"/></radialGradient></defs>
<circle cx="8" cy="8" r="6.1" fill="url(#rx764147)" stroke="#c05a30" stroke-width="0.9"/>
<path d="M5.9 5.9 L10.1 10.1 M10.1 5.9 L5.9 10.1" stroke="#fff" stroke-width="2.3" stroke-linecap="round"/></svg>
<span style="left:53.50px;top:169px;font-size:11px;line-height:11px;color:#0e0e46;letter-spacing:-0.100px;">Anello protezione motore</span>
<span style="left:255.20px;top:169px;font-size:11px;line-height:11px;color:#0e0e46;letter-spacing:0.213px;">9111.229.060</span>
<span style="left:457.00px;top:169px;font-size:11px;line-height:11px;color:#0e0e46;letter-spacing:-0.044px;">2000000024691</span>
<span style="left:557.50px;top:169px;font-size:11px;line-height:11px;color:#0e0e46;">шт</span>
<span style="left:672.17px;top:169px;font-size:11px;line-height:11px;color:#0e0e46;">2</span>
<span style="left:737.17px;top:169px;font-size:11px;line-height:11px;color:#0e0e46;">3</span>
<svg style="left:747px;top:166px" width="16" height="16" viewBox="0 0 16 16"><path d="M1 3.5 L2 1.5 H9 L10 3.5 V9.5 H1Z" fill="#d9902f" stroke="#8a5a17" stroke-width="0.8"/><rect x="1.4" y="3.6" width="8.2" height="2.2" fill="#f3c26a"/><rect x="3.6" y="6.6" width="3.8" height="1.4" fill="#fff1c9" stroke="#8a5a17" stroke-width="0.4"/><path d="M5.5 9.5 L8.5 13.5 L14.5 5" stroke="#1d8a18" stroke-width="2.6" fill="none" stroke-linecap="round" stroke-linejoin="round"/><path d="M5.8 9.6 L8.5 13 L14.2 5.2" stroke="#59c53f" stroke-width="1" fill="none" stroke-linecap="round"/></svg>
<svg style="left:764px;top:165px" width="16" height="16" viewBox="0 0 16 16">
<defs><radialGradient id="rx764165" cx="0.42" cy="0.32" r="0.75"><stop offset="0" stop-color="#ffb08a"/><stop offset="0.5" stop-color="#ee5a34"/><stop offset="1" stop-color="#d43a1c"/></radialGradient></defs>
<circle cx="8" cy="8" r="6.1" fill="url(#rx764165)" stroke="#c05a30" stroke-width="0.9"/>
<path d="M5.9 5.9 L10.1 10.1 M10.1 5.9 L5.9 10.1" stroke="#fff" stroke-width="2.3" stroke-linecap="round"/></svg>
<span style="left:53.50px;top:187px;font-size:11px;line-height:11px;color:#0e0e46;letter-spacing:-0.178px;">Anello regolazione macinatura</span>
<span style="left:255.20px;top:187px;font-size:11px;line-height:11px;color:#0e0e46;letter-spacing:-0.378px;">4925PL2373</span>
<span style="left:457.00px;top:187px;font-size:11px;line-height:11px;color:#0e0e46;letter-spacing:-0.044px;">2000000088518</span>
<span style="left:557.50px;top:187px;font-size:11px;line-height:11px;color:#0e0e46;">шт</span>
<span style="left:672.17px;top:187px;font-size:11px;line-height:11px;color:#0e0e46;">2</span>
<span style="left:737.17px;top:187px;font-size:11px;line-height:11px;color:#0e0e46;">8</span>
<svg style="left:747px;top:184px" width="16" height="16" viewBox="0 0 16 16"><path d="M1 3.5 L2 1.5 H9 L10 3.5 V9.5 H1Z" fill="#d9902f" stroke="#8a5a17" stroke-width="0.8"/><rect x="1.4" y="3.6" width="8.2" height="2.2" fill="#f3c26a"/><rect x="3.6" y="6.6" width="3.8" height="1.4" fill="#fff1c9" stroke="#8a5a17" stroke-width="0.4"/><path d="M5.5 9.5 L8.5 13.5 L14.5 5" stroke="#1d8a18" stroke-width="2.6" fill="none" stroke-linecap="round" stroke-linejoin="round"/><path d="M5.8 9.6 L8.5 13 L14.2 5.2" stroke="#59c53f" stroke-width="1" fill="none" stroke-linecap="round"/></svg>
<svg style="left:764px;top:183px" width="16" height="16" viewBox="0 0 16 16">
<defs><radialGradient id="rx764183" cx="0.42" cy="0.32" r="0.75"><stop offset="0" stop-color="#ffb08a"/><stop offset="0.5" stop-color="#ee5a34"/><stop offset="1" stop-color="#d43a1c"/></radialGradient></defs>
<circle cx="8" cy="8" r="6.1" fill="url(#rx764183)" stroke="#c05a30" stroke-width="0.9"/>
<path d="M5.9 5.9 L10.1 10.1 M10.1 5.9 L5.9 10.1" stroke="#fff" stroke-width="2.3" stroke-linecap="round"/></svg>
<span style="left:53.50px;top:205px;font-size:11px;line-height:11px;color:#0e0e46;letter-spacing:-0.066px;">Antriebsmotor zu Ruhrsta.spender</span>
<span style="left:255.20px;top:205px;font-size:11px;line-height:11px;color:#0e0e46;letter-spacing:-0.047px;">9121.202.00P</span>
<span style="left:457.00px;top:205px;font-size:11px;line-height:11px;color:#0e0e46;letter-spacing:-0.044px;">2000000000534</span>
<span style="left:557.50px;top:205px;font-size:11px;line-height:11px;color:#0e0e46;">шт</span>
<span style="left:672.17px;top:205px;font-size:11px;line-height:11px;color:#0e0e46;">2</span>
<span style="left:731.05px;top:205px;font-size:11px;line-height:11px;color:#0e0e46;">10</span>
<svg style="left:747px;top:202px" width="16" height="16" viewBox="0 0 16 16"><path d="M1 3.5 L2 1.5 H9 L10 3.5 V9.5 H1Z" fill="#d9902f" stroke="#8a5a17" stroke-width="0.8"/><rect x="1.4" y="3.6" width="8.2" height="2.2" fill="#f3c26a"/><rect x="3.6" y="6.6" width="3.8" height="1.4" fill="#fff1c9" stroke="#8a5a17" stroke-width="0.4"/><path d="M5.5 9.5 L8.5 13.5 L14.5 5" stroke="#1d8a18" stroke-width="2.6" fill="none" stroke-linecap="round" stroke-linejoin="round"/><path d="M5.8 9.6 L8.5 13 L14.2 5.2" stroke="#59c53f" stroke-width="1" fill="none" stroke-linecap="round"/></svg>
<svg style="left:764px;top:201px" width="16" height="16" viewBox="0 0 16 16">
<defs><radialGradient id="rx764201" cx="0.42" cy="0.32" r="0.75"><stop offset="0" stop-color="#ffb08a"/><stop offset="0.5" stop-color="#ee5a34"/><stop offset="1" stop-color="#d43a1c"/></radialGradient></defs>
<circle cx="8" cy="8" r="6.1" fill="url(#rx764201)" stroke="#c05a30" stroke-width="0.9"/>
<path d="M5.9 5.9 L10.1 10.1 M10.1 5.9 L5.9 10.1" stroke="#fff" stroke-width="2.3" stroke-linecap="round"/></svg>
<svg style="left:43px;top:204px" width="6" height="11"><path d="M0 0 L5.5 5.5 L0 11Z" fill="#000"/></svg>
<div style="left:959px;top:111px;width:17px;height:249px;background:#f0f0f0;"></div>
<svg style="left:963px;top:117px" width="9" height="6"><path d="M0.5 5 L4.5 1 L8.5 5" stroke="#404040" stroke-width="1.8" fill="none"/></svg>
<div style="left:38px;top:361px;width:938px;height:140px;border:1px solid #a6a6ae;"></div>
<div style="left:40px;top:363px;width:390px;height:17px;background:#f0f0f0;"></div>
<div style="left:40px;top:380px;width:391px;height:1px;background:#000;"></div>
<div style="left:51px;top:363px;width:1px;height:17px;background:#000;"></div>
<div style="left:132px;top:363px;width:1px;height:17px;background:#000;"></div>
<div style="left:203px;top:363px;width:1px;height:17px;background:#000;"></div>
<div style="left:268px;top:363px;width:1px;height:17px;background:#000;"></div>
<div style="left:349px;top:363px;width:1px;height:17px;background:#000;"></div>
<div style="left:430px;top:363px;width:1px;height:17px;background:#000;"></div>
<div style="left:51px;top:398px;width:380px;height:1px;background:#c0c0c0;"></div>
<div style="left:40px;top:381px;width:11px;height:17px;background:#f0f0f0;"></div>
<div style="left:40px;top:398px;width:11px;height:1px;background:#000;"></div>
<div style="left:51px;top:363px;width:1px;height:36px;background:#000;"></div>
<div style="left:132px;top:381px;width:1px;height:18px;background:#c0c0c0;"></div>
<div style="left:203px;top:381px;width:1px;height:18px;background:#c0c0c0;"></div>
<div style="left:268px;top:381px;width:1px;height:18px;background:#c0c0c0;"></div>
<div style="left:349px;top:381px;width:1px;height:18px;background:#c0c0c0;"></div>
<div style="left:430px;top:381px;width:1px;height:18px;background:#c0c0c0;"></div>
<span style="left:53.60px;top:367px;font-size:11px;line-height:11px;color:#0e0e46;letter-spacing:0.120px;">Дата заказа</span>
<span style="left:134.50px;top:367px;font-size:11px;line-height:11px;color:#0e0e46;letter-spacing:0.109px;">№ заказа</span>
<span style="left:205.30px;top:367px;font-size:11px;line-height:11px;color:#0e0e46;letter-spacing:0.059px;">Кол-во</span>
<span style="left:270.50px;top:367px;font-size:11px;line-height:11px;color:#0e0e46;letter-spacing:0.069px;">Дата (план)</span>
<span style="left:351.50px;top:367px;font-size:11px;line-height:11px;color:#0e0e46;">Дата</span>
<span style="left:54.30px;top:385px;font-size:11px;line-height:11px;color:#0e0e46;letter-spacing:-0.085px;">18.02.2020</span>
<span style="left:135.00px;top:385px;font-size:11px;line-height:11px;color:#0e0e46;letter-spacing:-0.395px;">2622</span>
<span style="left:258.88px;top:385px;font-size:11px;line-height:11px;color:#0e0e46;">2</span>
<svg style="left:43px;top:384px" width="6" height="11"><path d="M0 0 L5.5 5.5 L0 11Z" fill="#000"/></svg>
<div style="left:40px;top:485px;width:936px;height:16px;background:#f0f0f0;"></div>
<svg style="left:45px;top:488.5px" width="6" height="9"><path d="M5 0.5 L1 4.5 L5 8.5" stroke="#404040" stroke-width="1.8" fill="none"/></svg>
<div style="left:57px;top:485px;width:17px;height:16px;background:#cdcdcd;"></div>
<div style="left:34px;top:516px;width:949px;height:1px;background:#fcfcfc;"></div>
<div style="left:34px;top:515px;width:949px;height:1px;background:#dfdfdf;"></div>
<span style="left:45.20px;top:522px;font-size:11.5px;line-height:11.5px;color:#ff0000;font-weight:bold;letter-spacing:-0.009px;">Недостаточно товара в наличии для списания</span>
<div style="left:893px;top:508px;width:1px;height:27px;background:#d8d8d8;"></div>
<div style="left:894px;top:508px;width:1px;height:27px;background:#fafafa;"></div>
<div style="left:901px;top:508px;width:70px;height:23px;background:#e6e6e6;border:1px solid #adadad;"></div>
<svg style="left:904.5px;top:510.5px" width="15" height="15" viewBox="0 0 15 15"><defs><linearGradient id="gg2" x1="0" y1="0" x2="0" y2="1"><stop offset="0" stop-color="#7acb34"/><stop offset="1" stop-color="#2c8c0e"/></linearGradient></defs>
<rect x="0.5" y="0.5" width="14" height="14" rx="2.6" fill="url(#gg2)" stroke="#2f7f14" stroke-width="0.8"/>
<path d="M11 3.6 H4 V11.4 H11" stroke="#fff" stroke-width="1.5" fill="none"/>
<path d="M5.8 6.4 H8.6 V4.4 L12.4 7.5 L8.6 10.6 V8.6 H5.8Z" fill="#fff"/></svg>
<span style="left:928.00px;top:517px;font-size:11px;line-height:11px;color:#0e0e46;letter-spacing:-0.230px;">Выход</span>
<div style="left:362px;top:207px;width:638px;height:310px;background:#ceb37f;border:1px solid #a58b59;"></div>
<svg style="left:372px;top:214px" width="16" height="16" viewBox="0 0 32 32">
<defs><radialGradient id="eb1" cx="0.42" cy="0.3" r="0.8"><stop offset="0" stop-color="#ff3a3a"/><stop offset="0.4" stop-color="#e60a0a"/><stop offset="0.8" stop-color="#b80000"/><stop offset="1" stop-color="#7a0000"/></radialGradient>
<linearGradient id="eb1g" x1="0" y1="0" x2="0" y2="1"><stop offset="0" stop-color="#fff" stop-opacity="0.6"/><stop offset="1" stop-color="#fff" stop-opacity="0"/></linearGradient></defs>
<circle cx="16.7" cy="16.7" r="15.2" fill="#2a0000"/>
<circle cx="15.7" cy="15.8" r="15.4" fill="url(#eb1)"/>
<ellipse cx="15.5" cy="6.8" rx="9.5" ry="5.2" fill="url(#eb1g)"/>
<path d="M8.2 8.8 L23 23.8 M23 8.8 L8.2 23.8" stroke="#f2ffff" stroke-width="3.6" stroke-linecap="butt"/></svg>
<span style="left:409.30px;top:216px;font-size:14.6px;line-height:14.6px;color:#000;letter-spacing:-0.897px;">XE2</span>
<span style="left:442.80px;top:216px;font-size:14.6px;line-height:14.6px;color:#000;letter-spacing:-0.539px;">Склад:</span>
<span style="left:498.30px;top:216px;font-size:14.6px;line-height:14.6px;color:#000;letter-spacing:-0.052px;">Тестовая</span>
<span style="left:564.20px;top:216px;font-size:14.6px;line-height:14.6px;color:#000;letter-spacing:0.331px;">БД</span>
<span style="left:586.70px;top:216px;font-size:14.6px;line-height:14.6px;color:#000;letter-spacing:-0.126px;">(ГОЛОВКО</span>
<span style="left:662.80px;top:216px;font-size:14.6px;line-height:14.6px;color:#000;letter-spacing:0.811px;">ЧП)</span>
<span style="left:694.90px;top:216px;font-size:14.6px;line-height:14.6px;color:#000;letter-spacing:0.372px;">[Администратор</span>
<span style="left:812.60px;top:216px;font-size:14.6px;line-height:14.6px;color:#000;letter-spacing:0.128px;">Системы]</span>
<div style="left:951px;top:208px;width:45px;height:20px;background:#c75050;"></div>
<svg style="left:969px;top:214px" width="10" height="9" viewBox="0 0 10 9"><path d="M1.3 1.2 L8.7 8.3 M8.7 1.2 L1.3 8.3" stroke="#fff" stroke-width="1.6" fill="none"/></svg>
<div style="left:907px;top:219px;width:8px;height:2px;background:#111;"></div>
<svg style="left:933px;top:214px" width="11" height="9"><rect x="0.5" y="1.5" width="9" height="6" stroke="#222" fill="none"/><path d="M0 1 H10" stroke="#222" stroke-width="2"/></svg>
<div style="left:370px;top:238px;width:625px;height:274px;background:#f0f0f0;"></div>
<div style="left:378px;top:254px;width:32px;height:32px;background:#c9c9c9;"></div>
<svg style="left:378px;top:254px" width="32" height="32" viewBox="0 0 32 32">
<defs><radialGradient id="eb2" cx="0.42" cy="0.3" r="0.8"><stop offset="0" stop-color="#ff3a3a"/><stop offset="0.4" stop-color="#e60a0a"/><stop offset="0.8" stop-color="#b80000"/><stop offset="1" stop-color="#7a0000"/></radialGradient>
<linearGradient id="eb2g" x1="0" y1="0" x2="0" y2="1"><stop offset="0" stop-color="#fff" stop-opacity="0.6"/><stop offset="1" stop-color="#fff" stop-opacity="0"/></linearGradient></defs>
<circle cx="16.7" cy="16.7" r="15.2" fill="#2a0000"/>
<circle cx="15.7" cy="15.8" r="15.4" fill="url(#eb2)"/>
<ellipse cx="15.5" cy="6.8" rx="9.5" ry="5.2" fill="url(#eb2g)"/>
<path d="M8.2 8.8 L23 23.8 M23 8.8 L8.2 23.8" stroke="#f2ffff" stroke-width="3.6" stroke-linecap="butt"/></svg>
<span style="left:673.50px;top:248px;font-size:11px;line-height:11px;color:#0a0aa0;letter-spacing:-0.239px;text-decoration:underline;">Домашняя страница КСАП "ГРАНИТ"</span>
<span style="left:916.50px;top:248px;font-size:11px;line-height:11px;color:#0a0aa0;letter-spacing:-0.068px;text-decoration:underline;">Список Задач</span>
<div style="left:418px;top:262px;width:567px;height:208px;background:#f0f0f0;border:1px solid #a6a6ac;border-right-color:#b4b4ba;border-bottom-color:#b4b4ba;box-shadow:inset 1px 1px 0 #fff;"></div>
<span style="left:420.50px;top:267px;font-size:11px;line-height:11px;color:#101048;letter-spacing:-0.210px;">Произошла ошибка:</span>
<span style="left:420.50px;top:280px;font-size:11px;line-height:11px;color:#101048;letter-spacing:-0.012px;">conversion error from string ""</span>
<span style="left:420.50px;top:293px;font-size:11px;line-height:11px;color:#101048;letter-spacing:-0.356px;">At procedure 'STORZAKAZDT_GDDDT_RETNKT' line: 63, col: 7</span>
<span style="left:420.50px;top:319px;font-size:11px;line-height:11px;color:#101048;letter-spacing:-0.154px;">Склад[ADMIN]</span>
<span style="left:420.50px;top:332px;font-size:11px;line-height:11px;color:#101048;letter-spacing:-0.137px;">Application.MainForm: FormStor(TFormStor) XE2  Склад:   Тестовая БД (ГОЛОВКО ЧП) [Администратор Системы]</span>
<span style="left:420.50px;top:345px;font-size:11px;line-height:11px;color:#101048;letter-spacing:-0.186px;">ActiveForm: SZGrpMakeForm(TSZGrpMakeForm) Групповая обработка заказов</span>
<span style="left:420.50px;top:358px;font-size:11px;line-height:11px;color:#101048;letter-spacing:-0.197px;">ActiveCustomForm: SZGrpMakeForm(TSZGrpMakeForm) Групповая обработка заказов</span>
<span style="left:420.50px;top:371px;font-size:11px;line-height:11px;color:#101048;letter-spacing:0.281px;">Qw.SQL.Text = &lt;&lt;</span>
<span style="left:420.50px;top:384px;font-size:11px;line-height:11px;color:#101048;letter-spacing:-0.096px;">select DS.DgvDtID, DD.Nbr, DD.Dat_</span>
<span style="left:420.50px;top:397px;font-size:11px;line-height:11px;color:#101048;letter-spacing:-0.224px;">from StorZakazDt_GddDt_RetnKt(:SZID, :STOR, :USERID, :ADATE) DS</span>
<span style="left:420.50px;top:410px;font-size:11px;line-height:11px;color:#101048;letter-spacing:-0.114px;">join DgvDt dd on DD.ID=DS.DgvDtID</span>
<span style="left:420.50px;top:423px;font-size:11px;line-height:11px;color:#101048;letter-spacing:-0.145px;">Group By DS.DgvDtID, DD.Nbr, DD.Dat_</span>
<span style="left:420.50px;top:436px;font-size:11px;line-height:11px;color:#101048;letter-spacing:-0.153px;">Order by DS.DgvDtID</span>
<span style="left:420.50px;top:449px;font-size:11px;line-height:11px;color:#101048;letter-spacing:2.141px;">&gt;&gt;</span>
<span style="left:418.50px;top:476px;font-size:11px;line-height:11px;color:#000;letter-spacing:0.123px;">Лобода Б.М., г. Харьков, Украина</span>
<span style="left:417.50px;top:492px;font-size:11px;line-height:11px;color:#0a0aa0;letter-spacing:-0.134px;text-decoration:underline;">barry@clevercomponents.com</span>
<span style="left:578.00px;top:492px;font-size:11px;line-height:11px;color:#000;letter-spacing:-0.122px;">тел. +380 99 67 85 897</span>
<div style="left:771px;top:479px;width:101px;height:21px;background:#e1e1e1;border:1px solid #adadad;background:linear-gradient(#f0f0f0,#e3e3e3);"></div>
<div style="left:883px;top:479px;width:101px;height:21px;background:#e1e1e1;border:1px solid #3399ff;background:linear-gradient(#f2f2f2,#e5e5e5);box-shadow:inset 0 0 0 1px rgba(80,170,255,0.45);"></div>
<span style="left:797.00px;top:486px;font-size:11px;line-height:11px;color:#000;letter-spacing:0.030px;">Скопировать</span>
<span style="left:911.00px;top:486px;font-size:11px;line-height:11px;color:#000;letter-spacing:-0.021px;">Продолжить</span>
<svg style="left:772px;top:482px" width="18" height="16" viewBox="0 0 18 16">
<path d="M1 1 H6.5 L9 3.5 V11 H1Z" fill="#c6ecff" stroke="#3a96d8" stroke-width="0.9"/>
<path d="M2.3 3.5 H4 M2.3 5.5 H4 M2.3 7.5 H4 M2.3 9.3 H4 M5 5.5 H7.5 M5 3.5 H6.3" stroke="#2f8fd6" stroke-width="1"/>
<path d="M6 5.5 H13 L16.5 9 V15.5 H6Z" fill="#c6ecff" stroke="#2a86cc" stroke-width="0.9"/>
<path d="M7.5 8 H10.2 M7.5 10 H10.2 M7.5 12 H10.2 M7.5 14 H10.2 M11.2 10 H15 M11.2 12 H15 M11.2 14 H15 M11.2 8 H13" stroke="#2389d4" stroke-width="1.1"/></svg>
<svg style="left:885.5px;top:482.5px" width="15" height="15" viewBox="0 0 15 15"><defs><linearGradient id="gg1" x1="0" y1="0" x2="0" y2="1"><stop offset="0" stop-color="#7acb34"/><stop offset="1" stop-color="#2c8c0e"/></linearGradient></defs>
<rect x="0.5" y="0.5" width="14" height="14" rx="2.6" fill="url(#gg1)" stroke="#2f7f14" stroke-width="0.8"/>
<path d="M11 3.6 H4 V11.4 H11" stroke="#fff" stroke-width="1.5" fill="none"/>
<path d="M5.8 6.4 H8.6 V4.4 L12.4 7.5 L8.6 10.6 V8.6 H5.8Z" fill="#fff"/></svg>
<div style="left:0px;top:729px;width:1366px;height:6px;background:#ada38e;background:linear-gradient(90deg,#a79d89,#b0a691 55%,#afa590 75%,#aaa08c);"></div>
<div style="left:238px;top:728px;width:57px;height:38px;border:1px solid #bdb5a6;background:#a69e8f;"></div>
<div style="left:300px;top:728px;width:57px;height:38px;border:1px solid #bdb5a6;background:#a69e8f;"></div>
<div style="left:548px;top:728px;width:57px;height:38px;border:1px solid #bdb5a6;background:#a69e8f;"></div>
<div style="left:610px;top:728px;width:57px;height:38px;border:1px solid #f4eee8;background:linear-gradient(135deg,#e6d8cf,#c3ad9f 60%,#d2c0b4);"></div>
<svg style="left:10px;top:734px" width="28" height="27" viewBox="0 0 28 27"><path d="M0.5 4.2 L11.3 2.6 V12.6 H0.5Z M12.6 2.4 L27 0.3 V12.6 H12.6Z M0.5 13.9 H11.3 V23.9 L0.5 22.3Z M12.6 13.9 H27 V26.2 L12.6 24.1Z" fill="#fff"/></svg>
<svg style="left:65px;top:731px" width="33" height="32" viewBox="0 0 33 32">
<defs><linearGradient id="ieg" x1="0" y1="0" x2="0" y2="1"><stop offset="0" stop-color="#6fd0ff"/><stop offset="1" stop-color="#1a7fd6"/></linearGradient></defs>
<path d="M16.5 5.5 C9.5 5.5 4.5 10.5 4.5 17.5 C4.5 24.5 9.5 29 16.5 29 C22 29 26.5 26 28.2 21.2 H21.5 C20.5 22.8 18.8 23.8 16.5 23.8 C13 23.8 10.8 21.5 10.5 18.5 H28.8 C29.3 11.5 24.5 5.5 16.5 5.5Z M10.7 14.5 C11.2 12 13.2 10.3 16.3 10.3 C19.5 10.3 21.6 12 22 14.5Z" fill="url(#ieg)" stroke="#1668b8" stroke-width="0.6"/>
<path d="M4 25 C-1 33 6 33 13 27.5" stroke="#f2b81a" stroke-width="2.2" fill="none"/>
<path d="M3.5 26 C1 18 10 6 22 2.5 C29 0.5 32.5 3 29.5 9.5" stroke="#f6c52a" stroke-width="2.4" fill="none"/></svg>
<svg style="left:127px;top:735px" width="32" height="29" viewBox="0 0 32 29">
<path d="M1 3 H12 L14 5.5 H30 V26 H1Z" fill="#f3d77d" stroke="#c9a63f" stroke-width="0.8"/>
<path d="M13 3.5 H22 L24 6 H13Z" fill="#f9ecb8"/><path d="M20 5 H29 V8 H20Z" fill="#fbf2cf"/>
<rect x="3" y="1" width="4" height="2" fill="#26b53c"/><rect x="12" y="3" width="3" height="2" fill="#d8342a"/><rect x="20.5" y="5" width="3" height="2" fill="#2a8be0"/>
<path d="M1 9 H30 V26 H1Z" fill="#f6dc8a"/>
<path d="M4 28 V18 C4 16.5 5 15.5 6.5 15.5 H25.5 C27 15.5 28 16.5 28 18 V28 H21 V21 H11 V28Z" fill="#7cc6ee" stroke="#2d8bcb" stroke-width="0.9"/>
<path d="M6 17 H26" stroke="#d9f1fd" stroke-width="1.4"/></svg>
<svg style="left:189px;top:731px" width="33" height="33" viewBox="0 0 33 33">
<defs><linearGradient id="ffg" x1="0.8" y1="0" x2="0.2" y2="1"><stop offset="0" stop-color="#ffde3a"/><stop offset="0.45" stop-color="#ff8a1a"/><stop offset="1" stop-color="#e8206a"/></linearGradient>
<radialGradient id="ffp" cx="0.5" cy="0.4" r="0.6"><stop offset="0" stop-color="#9a5cf0"/><stop offset="1" stop-color="#5a2fc0"/></radialGradient></defs>
<path d="M22 1 C25 4 26.5 6.5 26.5 9 C30 12 31.5 16 31 20 C30 27.5 24 32.5 16.5 32.5 C8 32.5 1.5 26 1.5 18 C1.5 13.5 3 10.5 5.5 8 C5.5 9.5 6 10.5 7 11.5 C9 8.5 12 7.5 14.5 8 C17 5 20 3.5 22 1Z" fill="url(#ffg)"/>
<circle cx="17.5" cy="18" r="7.6" fill="url(#ffp)"/>
<path d="M9 14 C11 11 15 10.5 18 12 C15.5 12 14 13 13.5 14.5 C15 16 17.5 16 19 15 C18 18 15 19.5 12 18.5 C10 17.5 9 16 9 14Z" fill="#ff9a1f"/></svg>
<svg style="left:251px;top:732px" width="32" height="31" viewBox="0 0 32 31">
<path d="M3 0.5 H27 L31.5 5 V28 C31.5 29.5 30.5 30.5 29 30.5 H3 C1.5 30.5 0.5 29.5 0.5 28 V3 C0.5 1.5 1.5 0.5 3 0.5Z" fill="#1f3fd8" stroke="#142a9a" stroke-width="0.8"/>
<rect x="9" y="1" width="13" height="9.5" fill="#d9dde6"/><rect x="17" y="2.5" width="3.5" height="6.5" fill="#1f3fd8"/>
<rect x="4.5" y="14.5" width="23" height="16" fill="#fff"/>
<path d="M6 18.5 H26 M6 22.5 H26 M6 26.5 H26" stroke="#e0202a" stroke-width="1.3"/>
<circle cx="2.5" cy="28.5" r="0.9" fill="#0a1560"/><circle cx="29.5" cy="28.5" r="0.9" fill="#0a1560"/></svg>
<svg style="left:314px;top:732px" width="31" height="31" viewBox="0 0 32 32">
<path d="M2.58 8.25 A15.5 15.5 0 0 1 29.42 8.25 L16 8.25 A7.75 7.75 0 0 0 9.29 19.875Z" fill="#de4a3c"/>
<path d="M29.42 8.25 A15.5 15.5 0 0 1 16 31.5 L22.71 19.875 A7.75 7.75 0 0 0 16 8.25Z" fill="#fbcd40"/>
<path d="M16 31.5 A15.5 15.5 0 0 1 2.58 8.25 L9.29 19.875 A7.75 7.75 0 0 0 22.71 19.875Z" fill="#1ea05a"/>
<circle cx="16" cy="16" r="7.2" fill="#fff"/><circle cx="16" cy="16" r="5.8" fill="#4c8bf5"/></svg>
<svg style="left:375px;top:732px" width="31" height="30" viewBox="0 0 31 30"><rect x="0.5" y="0.5" width="30" height="25" fill="#0606c8" stroke="#18e8ff" stroke-width="1"/><path d="M10.5 1 V25 M15.5 1 V25 M25.5 1 V25 M1 22 H30" stroke="#18e8ff" stroke-width="0.9"/><path d="M3 3 H8 M12 3 H14 M17.5 3 H23 M27 3 H29" stroke="#ffe820" stroke-width="1.2"/><path d="M2.5 6.5 H8.5 M2.5 9 H8.5 M2.5 11.5 H8.5 M2.5 14 H8.5 M17.5 6.5 H23 M17.5 9 H23 M12 6.5 H14 M12 9 H14 M12 11.5 H14 M12 14 H14 M27 6.5 H29 M27 9 H29 M27 11.5 H29 M2.5 23.7 H9 M17.5 23.7 H24" stroke="#30d8ff" stroke-width="1"/><rect x="0" y="26" width="31" height="2" fill="#101010"/><path d="M2 29 H5 M8 29 H11 M14 29 H17 M20 29 H23 M26 29 H29" stroke="#0a6a6a" stroke-width="2"/></svg>
<svg style="left:438px;top:733px" width="31" height="31" viewBox="0 0 31 31"><rect width="31" height="31" fill="#4b36b3"/>
<g transform="translate(15.5,15.5)" fill="#fff"><circle r="9"/>
<g id="gt"><rect x="-2.6" y="-12.5" width="5.2" height="6"/></g>
<rect x="-2.6" y="-12.5" width="5.2" height="6" transform="rotate(45)"/><rect x="-2.6" y="-12.5" width="5.2" height="6" transform="rotate(90)"/><rect x="-2.6" y="-12.5" width="5.2" height="6" transform="rotate(135)"/>
<rect x="-2.6" y="-12.5" width="5.2" height="6" transform="rotate(180)"/><rect x="-2.6" y="-12.5" width="5.2" height="6" transform="rotate(225)"/><rect x="-2.6" y="-12.5" width="5.2" height="6" transform="rotate(270)"/><rect x="-2.6" y="-12.5" width="5.2" height="6" transform="rotate(315)"/>
<circle r="4.8" fill="#4b36b3"/></g></svg>
<svg style="left:499px;top:732px" width="32" height="31" viewBox="0 0 32 31">
<defs><linearGradient id="opg" x1="0" y1="0" x2="0" y2="1"><stop offset="0" stop-color="#ff2a3a"/><stop offset="1" stop-color="#b80a1a"/></linearGradient></defs>
<ellipse cx="16" cy="15.5" rx="15.3" ry="15" fill="url(#opg)"/><ellipse cx="16.5" cy="15.5" rx="7.2" ry="11.8" fill="#857b6b"/>
<path d="M20 2 C27 5 31 10 31 15.5 C31 21 27 26 20 29 C25 25 26 20 26 15.5 C26 11 25 6 20 2Z" fill="#a00a18" opacity="0.55"/></svg>
<svg style="left:561px;top:731px" width="32" height="32" viewBox="0 0 32 32"><defs><radialGradient id="gdg" cx="0.4" cy="0.35" r="0.7"><stop offset="0" stop-color="#c8ff9a"/><stop offset="0.55" stop-color="#34d41c"/><stop offset="1" stop-color="#0f8a08"/></radialGradient></defs><circle cx="16.0" cy="4.2" r="3.3" fill="url(#gdg)" stroke="#0d7a08" stroke-width="0.4"/><circle cx="24.7" cy="7.8" r="3.3" fill="url(#gdg)" stroke="#0d7a08" stroke-width="0.4"/><circle cx="28.3" cy="16.5" r="3.3" fill="url(#gdg)" stroke="#0d7a08" stroke-width="0.4"/><circle cx="24.7" cy="25.2" r="3.3" fill="url(#gdg)" stroke="#0d7a08" stroke-width="0.4"/><circle cx="16.0" cy="28.8" r="3.3" fill="url(#gdg)" stroke="#0d7a08" stroke-width="0.4"/><circle cx="7.3" cy="25.2" r="3.3" fill="url(#gdg)" stroke="#0d7a08" stroke-width="0.4"/><circle cx="3.7" cy="16.5" r="3.3" fill="url(#gdg)" stroke="#0d7a08" stroke-width="0.4"/><circle cx="7.3" cy="7.8" r="3.3" fill="url(#gdg)" stroke="#0d7a08" stroke-width="0.4"/><circle cx="16" cy="16.5" r="3.3" fill="url(#gdg)" stroke="#0d7a08" stroke-width="0.4"/><path d="M2.5 12 L9 6 L9.5 9 C14 5.5 20 5 23.5 7.5 L18 8.5 C14.5 9.5 12.5 11.5 12.5 14 L14 16.5Z" fill="#f0289a" stroke="#a00e64" stroke-width="0.6"/><path d="M10.5 22.5 L21.5 15.5 L21 19.5 C24.5 20.5 27 23 28.5 27 C25.5 25 22.5 24.8 20.5 25.5 L20.8 29Z" fill="#ff9c1c" stroke="#b0660a" stroke-width="0.6"/></svg>
<svg style="left:623px;top:731px" width="32" height="32" viewBox="0 0 32 32">
<path d="M1.5 5 V20 M27.5 4 V14" stroke="#8a8f8c" stroke-width="1.6"/>
<path d="M0.5 11.5 H17 M0.5 18.5 H14" stroke="#e0a4a8" stroke-width="2.2"/>
<path d="M2 3.5 L6 1 H21.5 L20 8 H2Z" fill="#6a86e0" stroke="#4860b8" stroke-width="0.6"/><rect x="13" y="4" width="5" height="2.6" fill="#66cc7a"/><path d="M5 2.8 H20" stroke="#b8c8f8" stroke-width="1"/>
<path d="M14.5 10.5 L25.5 8 L31 10.5 V27 L20.5 30 L14.5 27Z" fill="#ec9552" stroke="#a8703a" stroke-width="0.7"/>
<path d="M14.5 10.5 L20.5 13 L31 10.5 M20.5 13 V30" stroke="#c07a40" stroke-width="0.7" fill="none"/>
<path d="M17.2 14 V26 M24.5 14.5 V26.5 M28 13.5 V25.5" stroke="#fff" stroke-width="2"/>
<path d="M3 21.5 L9 18.5 L15.5 21 V28.5 L9.5 31.5 L3 28.5Z" fill="#f4f4f4" stroke="#8a8f8c" stroke-width="0.8"/>
<path d="M3 21.5 L9.5 24 L15.5 21 M9.5 24 V31.5" stroke="#a8acaa" stroke-width="0.7" fill="none"/>
<path d="M10.8 27 L14.2 25.3 V27.8 L10.8 29.5Z" fill="#5a86d8"/></svg>
<svg style="left:1106px;top:746px" width="10" height="6"><path d="M0 5.5 L5 0.5 L10 5.5Z" fill="#fff"/></svg>
<svg style="left:1126px;top:740px" width="18" height="18" viewBox="0 0 18 18"><path d="M1.5 1 V17" stroke="#fff" stroke-width="1.6"/><path d="M3 2 C6 0.5 8 3.5 12 2 V9 C8 10.5 6 7.5 3 9Z" fill="none" stroke="#fff" stroke-width="1.3"/>
<circle cx="12.2" cy="12.6" r="4.8" fill="#e0202a" stroke="#fff" stroke-width="0.6"/><path d="M10.2 10.6 L14.2 14.6 M14.2 10.6 L10.2 14.6" stroke="#fff" stroke-width="1.5"/></svg>
<svg style="left:1151px;top:740px" width="18" height="17" viewBox="0 0 18 17"><path d="M2.2 0.5 V4 M5.2 0.5 V4" stroke="#fff" stroke-width="1.3"/><path d="M0.8 4 H6.6 V7.5 C6.6 9 5.5 9.5 4.4 9.5 V16.5 H3 V9.5 C1.9 9.5 0.8 9 0.8 7.5Z" fill="#fff"/>
<rect x="8.8" y="3" width="7.6" height="13" fill="none" stroke="#fff" stroke-width="1.5"/><rect x="10.8" y="1" width="3.6" height="2" fill="#fff"/></svg>
<svg style="left:1174px;top:742px" width="18" height="14" viewBox="0 0 18 14"><g fill="none" stroke="#fff" stroke-width="1"><rect x="0.5" y="10.5" width="2" height="3"/><rect x="4" y="8.5" width="2" height="5"/><rect x="7.5" y="6.5" width="2" height="7"/><rect x="11" y="3.5" width="2" height="10"/><rect x="14.5" y="0.5" width="2" height="13"/></g><rect x="0.5" y="10.5" width="2" height="3" fill="#fff"/><rect x="4" y="8.5" width="2" height="5" fill="#fff"/><rect x="7.5" y="6.5" width="2" height="7" fill="#fff"/></svg>
<svg style="left:1202px;top:740px" width="10" height="17" viewBox="0 0 10 17"><path d="M0.7 5.5 H3 L8.5 0.8 V16.2 L3 11.5 H0.7Z" fill="none" stroke="#fff" stroke-width="1.2"/><path d="M6 3 V14 L8.5 16.2 V0.8Z" fill="#fff"/></svg>
<svg style="left:1223px;top:740px" width="16" height="17" viewBox="0 0 16 17"><path d="M8 0.5 C13 0.5 15.5 3 15.5 7.5 C15.5 12 13 14 8.5 14 L5.5 16.8 V13.6 C2 12.8 0.5 10.5 0.5 7.5 C0.5 3 3 0.5 8 0.5Z" fill="#7d5ccf"/>
<path d="M4.6 4 C5 3.5 5.6 3.4 6 4 L6.8 5.2 C7 5.7 6.8 6 6.4 6.4 C6.8 7.6 7.8 8.8 9.2 9.4 C9.6 9 10 8.8 10.5 9.1 L11.6 9.9 C12.1 10.3 12 10.9 11.5 11.3 C10.8 12 10 12 9 11.6 C6.5 10.5 4.8 8.5 4.1 6.2 C3.8 5.2 4 4.5 4.6 4Z" fill="#fff"/>
<path d="M8.3 3.4 C10.5 3.5 12 5 12.1 7.2 M8.6 4.9 C9.8 5 10.6 5.8 10.7 7" stroke="#fff" stroke-width="0.7" fill="none"/></svg>
<span style="left:1253.50px;top:743px;font-size:12px;line-height:12px;color:#fff;letter-spacing:-1.016px;">РУС</span>
<span style="left:1306.50px;top:735px;font-size:12px;line-height:12px;color:#fff;letter-spacing:-0.758px;">23:30</span>
<span style="left:1292.50px;top:751px;font-size:12px;line-height:12px;color:#fff;letter-spacing:-0.674px;">31.03.2020</span>
<span style="left:1006.50px;top:634px;font-size:19px;line-height:19px;color:rgba(110,110,110,0.45);letter-spacing:0.556px;">Активация Windows</span>
<span style="left:1006.50px;top:659px;font-size:15px;line-height:15px;color:rgba(110,110,110,0.45);letter-spacing:0.020px;">Чтобы активировать Windows, перейдите к</span>
<span style="left:1006.50px;top:679px;font-size:15px;line-height:15px;color:rgba(110,110,110,0.45);letter-spacing:0.167px;">параметрам компьютера.</span>
</body></html>
